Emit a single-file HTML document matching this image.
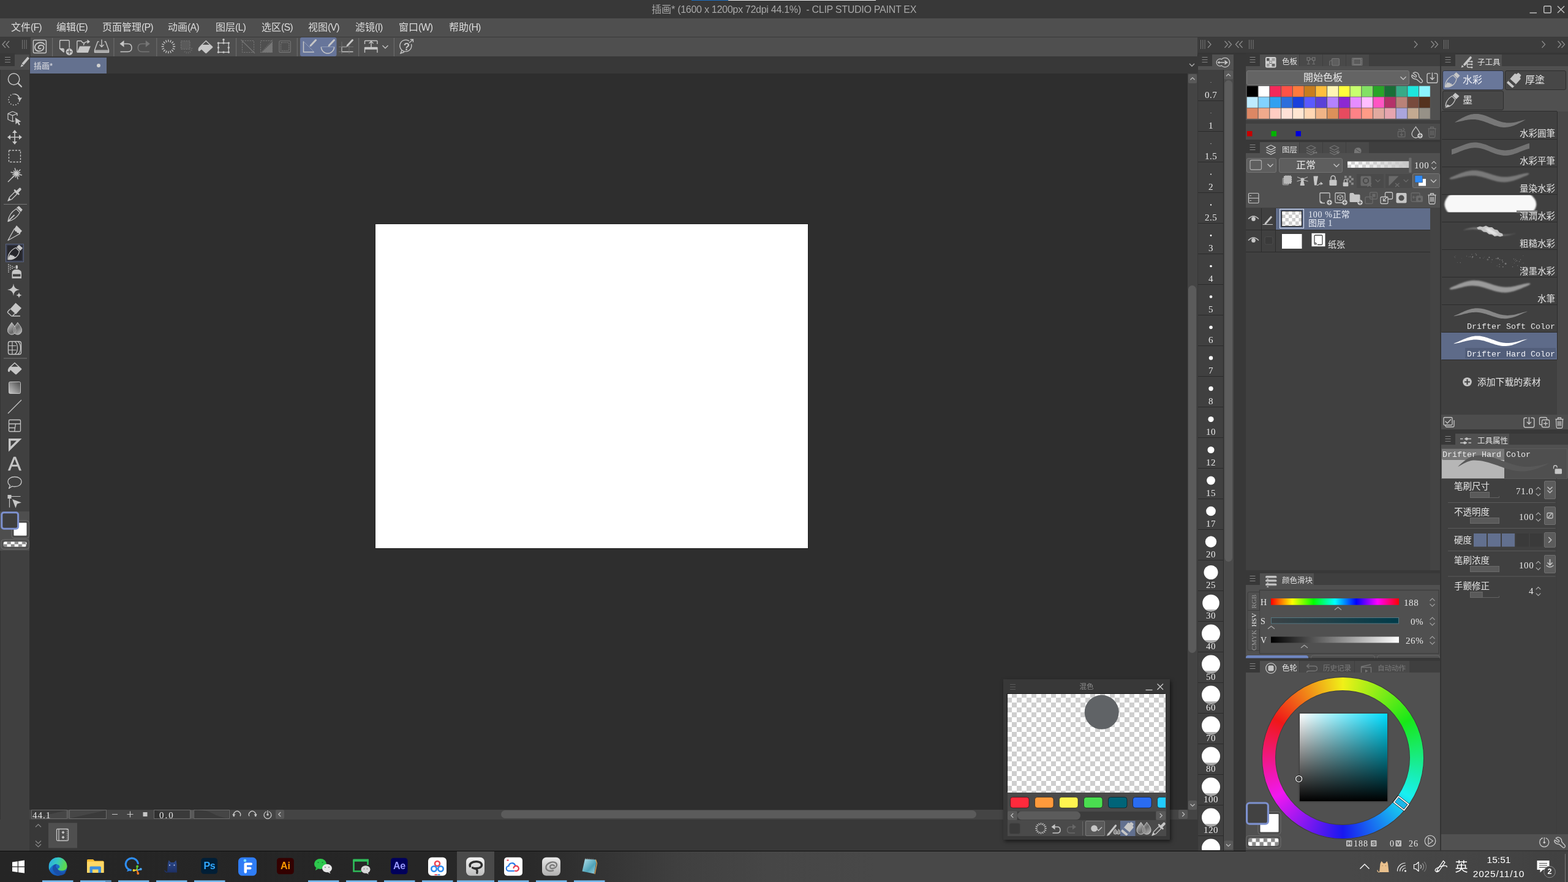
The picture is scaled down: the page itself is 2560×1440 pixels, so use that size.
<!DOCTYPE html>
<html lang="zh"><head><meta charset="utf-8"><title>CLIP STUDIO PAINT</title><style>html,body{margin:0;padding:0}
body{width:2560px;height:1440px;position:relative;overflow:hidden;background:#2e2e2e;font-family:"Liberation Sans","Noto Sans CJK SC",sans-serif}
.a{position:absolute;display:block}
.t{white-space:nowrap;overflow:visible;will-change:transform}
.c{display:inline-block;vertical-align:baseline;white-space:nowrap;font-family:"Liberation Sans","Noto Sans CJK SC",sans-serif}
.g{overflow:visible}
.se{font-family:"Liberation Serif","Noto Sans CJK SC",serif}
.mo{font-family:"Liberation Mono",monospace}
svg{overflow:hidden}</style></head>
<body>
<div class="a" style="left:0px;top:0px;width:2560px;height:30px;background:#383838;"></div>
<div class="a" style="left:1129px;top:0px;width:60px;height:1px;background:#1b6fc2;"></div>
<div class="a" style="left:1189px;top:0px;width:241px;height:1px;background:#f0f0f0;"></div>
<div class="a t" style="top:5px;font-size:16px;line-height:22px;color:#a8a8a8;left:1064px;"><span class="c" style="width:32px">插画</span><span style="letter-spacing:-0.27px">* (1600 x 1200px 72dpi 44.1%)&nbsp; - CLIP STUDIO PAINT EX</span></div>
<svg class="a" style="left:2490px;top:4px;" width="70" height="24" viewBox="2490 4 70 24"><g stroke="#c6c6c6" stroke-width="1.4" fill="none"><path d="M2497.5 21h11.5"/><rect x="2520.7" y="10" width="11.5" height="11" rx="1.5"/><path d="M2543 10l11 11M2554 10l-11 11"/></g></svg>
<div class="a" style="left:0px;top:30px;width:2560px;height:30px;background:#4f4f4f;"></div>
<div class="a" style="left:0px;top:60px;width:2560px;height:1px;background:#393939;"></div>
<div class="a t" style="top:34px;font-size:16px;line-height:22px;color:#dcdcdc;left:18px;"><span class="c" style="width:32px">文件</span><span style="letter-spacing:-0.9px">(F)</span></div>
<div class="a t" style="top:34px;font-size:16px;line-height:22px;color:#dcdcdc;left:92px;"><span class="c" style="width:32px">编辑</span><span style="letter-spacing:-0.9px">(E)</span></div>
<div class="a t" style="top:34px;font-size:16px;line-height:22px;color:#dcdcdc;left:167px;"><span class="c" style="width:64px">页面管理</span><span style="letter-spacing:-0.9px">(P)</span></div>
<div class="a t" style="top:34px;font-size:16px;line-height:22px;color:#dcdcdc;left:274px;"><span class="c" style="width:32px">动画</span><span style="letter-spacing:-0.9px">(A)</span></div>
<div class="a t" style="top:34px;font-size:16px;line-height:22px;color:#dcdcdc;left:352px;"><span class="c" style="width:32px">图层</span><span style="letter-spacing:-0.9px">(L)</span></div>
<div class="a t" style="top:34px;font-size:16px;line-height:22px;color:#dcdcdc;left:427px;"><span class="c" style="width:32px">选区</span><span style="letter-spacing:-0.9px">(S)</span></div>
<div class="a t" style="top:34px;font-size:16px;line-height:22px;color:#dcdcdc;left:503px;"><span class="c" style="width:32px">视图</span><span style="letter-spacing:-0.9px">(V)</span></div>
<div class="a t" style="top:34px;font-size:16px;line-height:22px;color:#dcdcdc;left:580px;"><span class="c" style="width:32px">滤镜</span><span style="letter-spacing:-0.9px">(I)</span></div>
<div class="a t" style="top:34px;font-size:16px;line-height:22px;color:#dcdcdc;left:651px;"><span class="c" style="width:32px">窗口</span><span style="letter-spacing:-0.9px">(W)</span></div>
<div class="a t" style="top:34px;font-size:16px;line-height:22px;color:#dcdcdc;left:733px;"><span class="c" style="width:32px">帮助</span><span style="letter-spacing:-0.9px">(H)</span></div>
<div class="a" style="left:0px;top:61px;width:50px;height:31px;background:#3c3c3c;"></div>
<div class="a" style="left:50px;top:61px;width:1905px;height:31px;background:#4f4f4f;"></div>
<div class="a" style="left:1955px;top:61px;width:605px;height:27px;background:#3c3c3c;"></div>
<svg class="a" style="left:0px;top:61px;" width="700" height="32" viewBox="0 61 700 32"><path d="M9 67L4 72.5L9 78" stroke="#8e8e8e" stroke-width="1.3" fill="none"/><path d="M15 67L10 72.5L15 78" stroke="#8e8e8e" stroke-width="1.3" fill="none"/><path d="M36.5 65v15M39.8 65v15M43.1 65v15" stroke="#777" stroke-width="1" fill="none"/><path d="M85.6 62v30" stroke="#6c6c6c" stroke-width="1.2"/><path d="M185.9 62v30" stroke="#6c6c6c" stroke-width="1.2"/><path d="M255.8 62v30" stroke="#6c6c6c" stroke-width="1.2"/><path d="M385.6 62v30" stroke="#6c6c6c" stroke-width="1.2"/><path d="M485.3 62v30" stroke="#6c6c6c" stroke-width="1.2"/><path d="M585.6 62v30" stroke="#6c6c6c" stroke-width="1.2"/><path d="M643.4 62v30" stroke="#6c6c6c" stroke-width="1.2"/><rect x="490" y="61" width="59.5" height="31" rx="3" fill="#67759a"/><rect x="54.4" y="65.6" width="21" height="21" rx="2" fill="none" stroke="#c6c6c6" stroke-width="1.5"/><path d="M72.6 72.8C70.5 68.5 62 68.3 58.5 72.8C55.5 76.8 57 82.5 62 83.5C67 84.5 72.3 80.5 71.3 76.5C70.3 73.2 65 72.8 63 75.8C61.5 78.3 63.8 80.5 66.5 79.2" fill="none" stroke="#c6c6c6" stroke-width="1.8" stroke-linecap="round"/><path d="M97.6 65.8h14q1.6 0 1.6 1.6v11M104.5 85h-0.5l-6.4-5.5v-12q0-1.7 1.6-1.7M97.8 79.5h5q1.5 0 1.5 1.5v4" fill="none" stroke="#c6c6c6" stroke-width="1.4"/><path d="M98 80h5.5v5z" fill="#c6c6c6"/><circle cx="113.2" cy="84.6" r="5.6" fill="#c6c6c6"/><path d="M113.2 80.8v7.6M109.4 84.6h7.6" stroke="#4f4f4f" stroke-width="1.2"/><path d="M125.8 85v-17q0-1.2 1.2-1.2h5.5l2.5 3h2" fill="none" stroke="#c6c6c6" stroke-width="1.4"/><path d="M125.5 86l4.5-10.5h17.8l-4 10.5z" fill="#c6c6c6"/><path d="M136.5 74c0-4 3-6 7.5-6" fill="none" stroke="#c6c6c6" stroke-width="1.5"/><path d="M142.5 64.5l4.5 3.5l-4.5 3.5z" fill="#c6c6c6"/><path d="M161.5 68h-2l-5 14v3.5h23v-3.5l-5-14h-2" fill="none" stroke="#c6c6c6" stroke-width="1.4" stroke-linejoin="round"/><rect x="155" y="81.5" width="22" height="3.5" fill="#a8a8a8"/><path d="M166 64.5v11.5M162.5 73l3.5 3.5l3.5-3.5" fill="none" stroke="#c6c6c6" stroke-width="1.4"/><path d="M196.5 84.5h12q6.5 0 6.5-6.5q0-6.5-6.5-6.5h-6" fill="none" stroke="#c6c6c6" stroke-width="1.5"/><path d="M195.5 71.5l7-5.5v11z" fill="#c6c6c6"/><g transform="translate(470.3,0) scale(-1,1)"><path d="M226.5 84.5h12q6.5 0 6.5-6.5q0-6.5-6.5-6.5h-6" fill="none" stroke="#767676" stroke-width="1.5"/><path d="M225.5 71.5l7-5.5v11z" fill="#767676"/></g><path d="M282.3 76L286.2 76M281.74 78.83L285.34 80.32M280.13 81.23L282.89 83.99M277.73 82.84L279.22 86.44M274.9 83.4L274.9 87.3M272.07 82.84L270.58 86.44M269.67 81.23L266.91 83.99M268.06 78.83L264.46 80.32M267.5 76L263.6 76M268.06 73.17L264.46 71.68M269.67 70.77L266.91 68.01M272.07 69.16L270.58 65.56M274.9 68.6L274.9 64.7M277.73 69.16L279.22 65.56M280.13 70.77L282.89 68.01M281.74 73.17L285.34 71.68" stroke="#c6c6c6" stroke-width="1.4" fill="none"/><rect x="295.5" y="66.8" width="14.5" height="13.5" fill="#5a5a5a" stroke="#767676" stroke-width="1" stroke-dasharray="2.5 1.5"/><path d="M311.5 79L314.5 79M310.96 81.39L313.66 82.69M309.43 83.3L311.3 85.65M307.22 84.36L307.89 87.29M304.78 84.36L304.11 87.29M302.57 83.3L300.7 85.65" stroke="#666" stroke-width="1.3" fill="none"/><path d="M336.3 65.8l10.8 10.2q0.8 0.9 0 1.8l-9.8 9q-1 0.8-2 0l-6.3-6l-3 2.5q-2.5 0.8-2.5-2q0.3-4 3.5-6.5z" fill="#c6c6c6"/><path d="M336.3 67.8l5.6 5.2h-11.2z" fill="#4f4f4f"/><rect x="356.5" y="70.3" width="16.8" height="15" fill="none" stroke="#c6c6c6" stroke-width="1.4"/><path d="M365 70v-5" stroke="#c6c6c6" stroke-width="1.4"/><circle cx="356.5" cy="70.3" r="1.7" fill="#c6c6c6"/><circle cx="365" cy="70.3" r="1.7" fill="#c6c6c6"/><circle cx="373.3" cy="70.3" r="1.7" fill="#c6c6c6"/><circle cx="356.5" cy="77.8" r="1.7" fill="#c6c6c6"/><circle cx="373.3" cy="77.8" r="1.7" fill="#c6c6c6"/><circle cx="356.5" cy="85.3" r="1.7" fill="#c6c6c6"/><circle cx="365" cy="85.3" r="1.7" fill="#c6c6c6"/><circle cx="373.3" cy="85.3" r="1.7" fill="#c6c6c6"/><circle cx="365" cy="64.8" r="1.7" fill="#c6c6c6"/><rect x="395.5" y="66.5" width="19" height="19" fill="none" stroke="#767676" stroke-width="1" stroke-dasharray="2.5 1.5"/><path d="M393.5 65l22.5 22" stroke="#767676" stroke-width="1.3"/><rect x="425.5" y="66.5" width="19" height="19" fill="none" stroke="#767676" stroke-width="1" stroke-dasharray="2.5 1.5"/><path d="M444.8 68v17.8h-17.8z" fill="#767676"/><path d="M426 86l19-21" stroke="#767676" stroke-width="1" stroke-dasharray="2 1.3"/><rect x="455.8" y="66.8" width="18.6" height="18.6" rx="2" fill="none" stroke="#767676" stroke-width="1.1"/><rect x="458.5" y="69.5" width="13.2" height="13.2" rx="1.5" fill="none" stroke="#767676" stroke-width="1.6" stroke-dasharray="1.5 1.5"/><path d="M495.5 67.5v17.5h17.5" fill="none" stroke="#c6c6c6" stroke-width="1.5"/><path d="M495.5 67.5l17.5 17.5" stroke="#8f9bb8" stroke-width="1"/><path d="M507.5 74L515.5 65.5" stroke="#c6c6c6" stroke-width="3" stroke-linecap="round"/><path d="M505.3 76.2l1-3l2 2z" fill="#c6c6c6"/><path d="M524.3 76.5a10.7 10.7 0 0 0 21.4 0" fill="none" stroke="#c6c6c6" stroke-width="1.4"/><path d="M524.3 76.5h21.4" stroke="#8f9bb8" stroke-width="1"/><path d="M537.5 74L545.5 65.5" stroke="#c6c6c6" stroke-width="3" stroke-linecap="round"/><path d="M535.3 76.2l1-3l2 2z" fill="#c6c6c6"/><path d="M558 76.5v8h18.5M558 76.5h8" fill="none" stroke="#c6c6c6" stroke-width="1.4"/><path d="M553 76.5h24M558 68v20M570 74v14M553 84.5h5" stroke="#777" stroke-width="0.8"/><path d="M567.5 74L575.5 65.5" stroke="#c6c6c6" stroke-width="3" stroke-linecap="round"/><path d="M565.3 76.2l1-3l2 2z" fill="#c6c6c6"/><path d="M595.5 72v-4.5q0-1 1-1h18.5q1 0 1 1v4.5M595.5 86v-8h20.5v8" fill="none" stroke="#c6c6c6" stroke-width="1.4"/><rect x="595.5" y="76.8" width="20.5" height="4" fill="#c6c6c6"/><path d="M606 77v-9M602.5 71l3.5-3.5l3.5 3.5" fill="none" stroke="#c6c6c6" stroke-width="1.4"/><path d="M624.5 74.25L629 78.75L633.5 74.25" stroke="#c6c6c6" stroke-width="1.3" fill="none"/><path d="M668 67a9.5 9.5 0 1 0 3.5 5" fill="none" stroke="#c6c6c6" stroke-width="1.4"/><path d="M656 82l-2 5l6-2" fill="none" stroke="#c6c6c6" stroke-width="1.4"/><path d="M668 70l6-5M670 64.5h4.5v4.5" fill="none" stroke="#c6c6c6" stroke-width="1.3"/></svg>
<div class="a t" style="top:65px;font-size:17px;line-height:23px;color:#c6c6c6;left:363.5px;width:600px;text-align:center;font-weight:bold;">?</div>
<div class="a" style="left:48px;top:92px;width:1907px;height:28px;background:#383838;"></div>
<div class="a" style="left:49px;top:94px;width:125px;height:26px;background:#64718f;"></div>
<div class="a t" style="top:97.5px;font-size:13px;line-height:19px;color:#e2e2e6;left:55px;"><span class="c" style="width:26px">插画</span>*</div>
<div class="a" style="left:158px;top:104px;width:6px;height:6px;background:#d0d0d0;border-radius:3px;"></div>
<svg class="a" style="left:1938px;top:98px;" width="16" height="16" viewBox="1938 98 16 16"><path d="M1942 104L1946 108L1950 104" stroke="#b0b0b0" stroke-width="1.3" fill="none"/></svg>
<div class="a" style="left:0px;top:88px;width:48px;height:1302px;background:#404040;"></div>
<div class="a" style="left:0px;top:86px;width:48px;height:3px;background:#3c3c3c;"></div>
<div class="a" style="left:0px;top:86.5px;width:24px;height:21.3px;background:#383838;"></div>
<div class="a" style="left:24px;top:89px;width:24px;height:25px;background:#4d4d4d;"></div>
<div class="a" style="left:0px;top:108px;width:48px;height:6px;background:#4d4d4d;"></div>
<div class="a" style="left:0px;top:114px;width:1px;height:1276px;background:#353535;"></div>
<div class="a" style="left:0px;top:835px;width:48px;height:64px;background:#4e4e4e;"></div>
<svg class="a" style="left:0px;top:86px;" width="49" height="820" viewBox="0 86 49 820"><path d="M8 93.5h9M8 97.5h9M8 101.5h9" stroke="#858585" stroke-width="1" fill="none"/><path d="M46.5 94l-9.5 11" stroke="#c6c6c6" stroke-width="4" stroke-linecap="butt"/><path d="M33.5 109.5l1.7-4.8l3.3 2.8z" fill="#c6c6c6"/><g transform="translate(24,131)"><circle cx="-1.4" cy="-1.8" r="9.2" fill="none" stroke="#c6c6c6" stroke-width="1.5"/><path d="M5.5 5l5.5 5.5" stroke="#c6c6c6" stroke-width="2.2" stroke-linecap="round"/></g><g transform="translate(24,162)"><circle cx="-2.56" cy="-8.36" r="0.9" fill="#c6c6c6"/><circle cx="-6.42" cy="-6.69" r="0.9" fill="#c6c6c6"/><circle cx="-9.09" cy="-3.45" r="0.9" fill="#c6c6c6"/><circle cx="-10" cy="0.66" r="0.9" fill="#c6c6c6"/><circle cx="-8.95" cy="4.73" r="0.9" fill="#c6c6c6"/><circle cx="-6.16" cy="7.87" r="0.9" fill="#c6c6c6"/><circle cx="-2.25" cy="9.41" r="0.9" fill="#c6c6c6"/><circle cx="1.93" cy="9.01" r="0.9" fill="#c6c6c6"/><circle cx="5.47" cy="6.75" r="0.9" fill="#c6c6c6"/><circle cx="7.61" cy="3.13" r="0.9" fill="#c6c6c6"/><circle cx="7.86" cy="-1.06" r="0.9" fill="#c6c6c6"/><circle cx="6.19" cy="-4.92" r="0.9" fill="#c6c6c6"/><path d="M-1-8.5a9 9 0 0 1 8.8 7" fill="none" stroke="#c6c6c6" stroke-width="1.5"/><path d="M4.5-2.5h7.5l-3.8 5.5z" fill="#c6c6c6"/></g><g transform="translate(24,193)"><path d="M-3.5-11l7.5 3v4M-3.5-11l-7.5 3.5v9.5l7.5 3.5l3-1.2M-11-7.5l7.5 3.2l7.5-3.2M-3.5-4.3v10" fill="none" stroke="#c6c6c6" stroke-width="1.3" stroke-linejoin="round"/><path d="M1-1l9.5 6.5l-4 0.8l2.3 4.2l-2 1l-2.3-4.3l-3 2.8z" fill="#c6c6c6"/></g><g transform="translate(24,224)"><path d="M0-7v14M-7 0h14" stroke="#c6c6c6" stroke-width="1.6"/><path d="M0-12l4 5h-8zM0 12l4-5h-8zM-12 0l5-4v8zM12 0l-5-4v8z" fill="#c6c6c6"/></g><g transform="translate(24,255)"><rect x="-9.5" y="-9.5" width="19" height="19" fill="none" stroke="#c6c6c6" stroke-width="1.3" stroke-dasharray="3.2 2"/></g><g transform="translate(24,286)"><path d="M2.7-2.5L11.88 -0.04M2.7-2.5L7.3 2.1M2.7-2.5L5.16 6.68M2.7-2.5L1.02 3.78M2.7-2.5L-4.02 4.22M2.7-2.5L-3.58 -0.82M2.7-2.5L-6.48 -4.96M2.7-2.5L-1.9 -7.1M2.7-2.5L0.24 -11.68M2.7-2.5L4.38 -8.78M2.7-2.5L9.42 -9.22M2.7-2.5L8.98 -4.18" stroke="#c6c6c6" stroke-width="1.5"/><circle cx="2.7" cy="-2.5" r="3.2" fill="#c6c6c6"/><path d="M-11 11l11-11" stroke="#c6c6c6" stroke-width="1.5"/></g><g transform="translate(24,317)"><path d="M-11 11l2.5-6l9-9l3.5 3.5l-9 9z" fill="none" stroke="#c6c6c6" stroke-width="1.3" stroke-linejoin="round"/><path d="M-11 11l2-5l3 3z" fill="#c6c6c6"/><path d="M0-6.5l6.5 6.5" stroke="#c6c6c6" stroke-width="2.5" stroke-linecap="round"/><path d="M4-3.5l4.5-4.5" stroke="#c6c6c6" stroke-width="4.5" stroke-linecap="round"/></g><path d="M6 333.5h38" stroke="#777" stroke-width="1"/><g transform="translate(24,350)"><path d="M-11 11.5c1-8 6-16 13.5-20.5l6 6c-4.5 7.5-12 13-19.5 14.5z" fill="none" stroke="#c6c6c6" stroke-width="1.3" stroke-linejoin="round"/><path d="M-10 10.5l9-9" stroke="#c6c6c6" stroke-width="1.8" stroke-linecap="round"/><path d="M3-11l3.8-2.7l6 6l-2.7 3.7z" fill="#c6c6c6"/></g><g transform="translate(24,381)"><path d="M-11 11.5l10.5-19l9 8z" fill="none" stroke="#c6c6c6" stroke-width="1.4" stroke-linejoin="round"/><path d="M-0.5-7.5l3.5-5.5l9 9l-4 4.5l-2-1.5l-2 0.5l-1-2.5l-2.5-0.5z" fill="#c6c6c6"/></g><rect x="9.5" y="398.5" width="29" height="29" fill="#27272c" stroke="#59637f" stroke-width="1"/><rect x="11" y="400" width="26" height="26" fill="none" stroke="#49506a" stroke-width="1"/><g transform="translate(24,412)"><path d="M-11 11.5c-0.5-8 5-16 13-19l5.5 5.5c-1 8-8 14.5-18.5 13.5z" fill="none" stroke="#c6c6c6" stroke-width="1.3"/><path d="M-11 11.5c0.5-3 2-6 4-8l1.5 1.5l1.5-1l1 2l2-0.5l0.5 2l2.5 0c-3 3-8 4.5-13 4z" fill="#c6c6c6"/><path d="M3-8.5l4-4l6 5.5l-4 4.5z" fill="#c6c6c6"/></g><g transform="translate(24,443)"><rect x="-10.8" y="-11.8" width="1.6" height="1.6" fill="#c6c6c6"/><rect x="-10.8" y="-8.8" width="1.6" height="1.6" fill="#c6c6c6"/><rect x="-10.8" y="-5.8" width="1.6" height="1.6" fill="#c6c6c6"/><rect x="-10.8" y="-2.8" width="1.6" height="1.6" fill="#c6c6c6"/><rect x="-10.8" y="0.19999999999999996" width="1.6" height="1.6" fill="#c6c6c6"/><rect x="-7.8" y="-10.3" width="1.6" height="1.6" fill="#c6c6c6"/><rect x="-7.8" y="-7.3" width="1.6" height="1.6" fill="#c6c6c6"/><rect x="-7.8" y="-4.3" width="1.6" height="1.6" fill="#c6c6c6"/><rect x="-4.8" y="-8.8" width="1.6" height="1.6" fill="#c6c6c6"/><rect x="-4.8" y="-5.8" width="1.6" height="1.6" fill="#c6c6c6"/><rect x="-1.8" y="-7.3" width="1.6" height="1.6" fill="#c6c6c6"/><rect x="1.5" y="-10" width="3.5" height="6" rx="1.5" fill="#c6c6c6"/><path d="M-4.5 11.5v-9q0-5.5 7.5-5.5q8 0 8 5.5v9z" fill="#c6c6c6"/><rect x="-3" y="4.5" width="12.5" height="4" fill="#404040"/></g><g transform="translate(24,475)"><path d="M-2 -12Q-1.2999999999999998 -2.7 8 -2Q-1.2999999999999998 -1.2999999999999998 -2 8Q-2.7 -1.2999999999999998 -12 -2Q-2.7 -2.7 -2 -12zM7 2Q7.35 6.65 12 7Q7.35 7.35 7 12Q6.65 7.35 2 7Q6.65 6.65 7 2z" fill="#c6c6c6"/></g><g transform="translate(24,506)"><path d="M1.5-11.5l9.5 8.5l-9 10l-9.5-8.5z" fill="#c6c6c6"/><path d="M-7.5-1.5l-3.5 4q-1 1.2 0 2.2l5.5 5q1 0.8 2 0l4.5-4.5M-4 10h13" fill="none" stroke="#c6c6c6" stroke-width="1.4"/></g><defs><linearGradient id="gb" x1="0" y1="0" x2="1" y2="1"><stop offset="0" stop-color="#d0d0d0"/><stop offset="0.55" stop-color="#6a6a6a"/><stop offset="1" stop-color="#c0c0c0"/></linearGradient><linearGradient id="gg" x1="1" y1="0" x2="0" y2="1"><stop offset="0" stop-color="#4a4a4a"/><stop offset="1" stop-color="#c8c8c8"/></linearGradient></defs><g transform="translate(24,537)"><path d="M-4.8-10.5c3.3 4.8 6.7 8 6.7 13a6.7 6.7 0 0 1-13.4 0c0-5 3.4-8.2 6.7-13zM4.8-10.5c3.3 4.8 6.7 8 6.7 13a6.7 6.7 0 0 1-13.4 0c0-5 3.4-8.2 6.7-13z" fill="url(#gb)" stroke="#c6c6c6" stroke-width="1"/><path d="M0-3.5c1.5 2 2 3.8 2 6a6.7 6.7 0 0 1-2 4.7a6.7 6.7 0 0 1-2-4.7c0-2.2 0.5-4 2-6z" fill="#8a8a8a"/></g><g transform="translate(24,568)"><rect x="-10.5" y="-10.5" width="21" height="21" rx="3" fill="none" stroke="#c6c6c6" stroke-width="1.4"/><path d="M-10.5-3.5h13M-10.5 3.5h13M-4-10.5v21M0-10.5c6 4 6 17 0 21M5-10.5c6 5 6 16 0 21" fill="none" stroke="#c6c6c6" stroke-width="1.2"/></g><path d="M6 585h38" stroke="#777" stroke-width="1"/><g transform="translate(24,602)"><path d="M0-10.5l11 10.3q0.8 0.9 0 1.8l-8 7.5q-1 0.8-2 0l-8-7l-1.5 3q-2.5 0.8-2.7-2q0.2-4 3.5-6.5z" fill="#c6c6c6"/><path d="M0-8.5l5.6 5.2h-11.2z" fill="#404040"/></g><g transform="translate(24,633)"><rect x="-9.5" y="-9.5" width="19" height="19" rx="2" fill="url(#gg)" stroke="#c6c6c6" stroke-width="1"/></g><g transform="translate(24,664)"><path d="M-11 11l22-22" stroke="#c6c6c6" stroke-width="1.3"/></g><g transform="translate(24,695)"><rect x="-9.5" y="-9.5" width="19" height="19" rx="1.5" fill="none" stroke="#c6c6c6" stroke-width="1.3"/><path d="M-9.5-3h19M-9.5 3.5h9.5M1.5-3l-1.8 12.5" fill="none" stroke="#c6c6c6" stroke-width="1.3"/></g><g transform="translate(24,726)"><path d="M-10-10h21.5l-21.5 21.5zM-6.5-6.5v9.5l9.5-9.5z" fill="#c6c6c6" fill-rule="evenodd"/></g><g transform="translate(24,788)"><path d="M0-9.5c6.5 0 11 3.5 11 8s-4.5 8-11 8c-1.5 0-3-0.2-4.3-0.6l-5.2 3.6l2-5c-2.2-1.5-3.5-3.6-3.5-6c0-4.5 4.5-8 11-8z" fill="none" stroke="#c6c6c6" stroke-width="1.3" stroke-linejoin="round"/></g><g transform="translate(24,819)"><rect x="-11.5" y="-11" width="6" height="6" fill="#c6c6c6"/><path d="M-8.5-8.5h18M-8.5-8.5v18" stroke="#c6c6c6" stroke-width="1.2"/><path d="M-4-4l15 5.5l-7 2l-2.5 7z" fill="#c6c6c6"/></g><rect x="19" y="850" width="28.5" height="28.5" rx="4" fill="#484848" stroke="#6e6e6e" stroke-width="1"/><rect x="22.5" y="853.5" width="21" height="21" rx="1" fill="#fff"/><rect x="2.8" y="836.8" width="26.8" height="26.5" rx="3.5" fill="#3e3e3e" stroke="#7d91cf" stroke-width="3"/><rect x="2" y="881" width="45.5" height="15.5" rx="4" fill="none" stroke="#6e6e6e" stroke-width="1"/><defs><pattern id="ck4" x="5.5" y="884.2" width="12.2" height="8.6" patternUnits="userSpaceOnUse"><rect width="12.2" height="8.6" fill="#fff"/><rect x="6.1" width="6.1" height="4.3" fill="#8a8a8a"/><rect y="4.3" width="6.1" height="4.3" fill="#8a8a8a"/></pattern></defs><rect x="5.5" y="884.2" width="38" height="8.6" rx="3" fill="url(#ck4)"/></svg>
<div class="a t" style="top:741px;font-size:32px;line-height:32px;color:#c6c6c6;left:-276px;width:600px;text-align:center;-webkit-text-stroke:0.5px #c6c6c6;">A</div>
<div class="a" style="left:48px;top:120px;width:1891px;height:1202px;background:#2e2e2e;"></div>
<div class="a" style="left:613px;top:366px;width:706px;height:529px;background:#ffffff;box-shadow:0 0 0 1px #202020;"></div>
<div class="a" style="left:1939px;top:120px;width:16px;height:1202px;background:#444444;"></div>
<div class="a" style="left:1955px;top:92px;width:1px;height:1298px;background:#383838;"></div>
<div class="a" style="left:1940px;top:121px;width:14px;height:15px;background:#585858;border-radius:2px;"></div>
<div class="a" style="left:1940px;top:1307px;width:14px;height:15px;background:#585858;border-radius:2px;"></div>
<div class="a" style="left:1940px;top:466px;width:13px;height:600px;background:#5b5b5b;border-radius:7px;"></div>
<svg class="a" style="left:1938px;top:120px;" width="18" height="1205" viewBox="1938 120 18 1205"><path d="M1943.5 130.25L1947 126.75L1950.5 130.25" stroke="#c0c0c0" stroke-width="1.2" fill="none"/><path d="M1943.5 1312.75L1947 1316.25L1950.5 1312.75" stroke="#c0c0c0" stroke-width="1.2" fill="none"/></svg>
<div class="a" style="left:48px;top:1322px;width:1907px;height:16px;background:#444444;"></div>
<div class="a" style="left:48px;top:1338px;width:1907px;height:52px;background:#383838;"></div>
<div class="a" style="left:0px;top:1338px;width:48px;height:52px;background:#404040;"></div>
<svg class="a" style="left:48px;top:1320px;" width="1910" height="70" viewBox="48 1320 1910 70"><rect x="51.5" y="1322.5" width="58" height="14" fill="#3a3a3a" stroke="#6a6a6a" stroke-width="1"/><rect x="113.5" y="1322.5" width="60" height="14" fill="#3a3a3a" stroke="#6a6a6a" stroke-width="1"/><rect x="251.5" y="1322.5" width="59" height="14" fill="#3a3a3a" stroke="#6a6a6a" stroke-width="1"/><rect x="316.5" y="1322.5" width="58" height="14" fill="#3a3a3a" stroke="#6a6a6a" stroke-width="1"/><path d="M52 1336l57-13v13zM114 1336l59-13h-59z" fill="#4a4a4a" opacity="0.8"/><path d="M252 1323l30 8q10 5 28-8z" fill="#4a4a4a" opacity="0"/><path d="M317 1323q20-1 30 5t26 8v-13z" fill="#454545"/><path d="M252 1323q8 1 14 7t10 6h-24z" fill="#303030"/><rect x="108.5" y="1322.5" width="4" height="14" fill="#5a5a5a"/><rect x="311" y="1322.5" width="4.5" height="14" fill="#5a5a5a"/><path d="M183 1329.5h9M207.5 1329.5h10M212.5 1324.5v10" stroke="#c6c6c6" stroke-width="1.2"/><rect x="233.5" y="1326" width="7" height="7" fill="#c6c6c6"/><path d="M382.5 1333a5.5 5.5 0 1 1 9.5-0.5" fill="none" stroke="#c6c6c6" stroke-width="1.4"/><path d="M379.5 1329l5 0.5l-3.5 4z" fill="#c6c6c6"/><g transform="translate(824,0) scale(-1,1)"><path d="M407.5 1333a5.5 5.5 0 1 1 9.5-0.5" fill="none" stroke="#c6c6c6" stroke-width="1.4"/><path d="M404.5 1329l5 0.5l-3.5 4z" fill="#c6c6c6"/></g><path d="M435 1325a6 6 0 1 0 4 0" fill="none" stroke="#c6c6c6" stroke-width="1.3"/><circle cx="437" cy="1330" r="1.8" fill="#c6c6c6"/><path d="M437 1323v6" stroke="#c6c6c6" stroke-width="1.2"/><rect x="450" y="1322" width="14" height="15" rx="2" fill="#565656"/><rect x="1924" y="1322" width="15" height="15" rx="2" fill="#565656"/><path d="M458.25 1326L454.75 1329.5L458.25 1333" stroke="#c0c0c0" stroke-width="1.2" fill="none"/><path d="M1930.25 1326L1933.75 1329.5L1930.25 1333" stroke="#c0c0c0" stroke-width="1.2" fill="none"/><rect x="818" y="1323" width="776" height="13" rx="6.5" fill="#5b5b5b"/><rect x="79" y="1343.5" width="47" height="41" fill="#4f4f4f"/><rect x="92.5" y="1353.5" width="19" height="19" rx="1.5" fill="none" stroke="#c6c6c6" stroke-width="1.3"/><path d="M96 1353.5v19" stroke="#c6c6c6" stroke-width="1.2"/><path d="M103 1356.5l2.5 2.5l-2.5 2.5l-2.5-2.5zM103 1364.5l2.5 2.5l-2.5 2.5l-2.5-2.5z" fill="#c6c6c6"/><path d="M109.5 1354v18" stroke="#c6c6c6" stroke-width="0.8" stroke-dasharray="1.5 1.5"/><path d="M58 1350.25L62.5 1345.75L67 1350.25" stroke="#8a8a8a" stroke-width="1.2" fill="none"/><path d="M58 1372.75L62.5 1377.25L67 1372.75" stroke="#8a8a8a" stroke-width="1.2" fill="none"/><path d="M58 1378.25L62.5 1382.75L67 1378.25" stroke="#8a8a8a" stroke-width="1.2" fill="none"/></svg>
<div class="a t se" style="top:1321px;font-size:15px;line-height:21px;color:#e6e6e6;left:53px;"><span style="letter-spacing:1px">44.1</span></div>
<div class="a t se" style="top:1321px;font-size:15px;line-height:21px;color:#e6e6e6;left:260px;"><span style="letter-spacing:2px">0.0</span></div>
<div class="a" style="left:1956px;top:88px;width:58px;height:1302px;background:#404040;"></div>
<div class="a" style="left:1956px;top:86.5px;width:23px;height:21.3px;background:#383838;"></div>
<div class="a" style="left:1979px;top:88px;width:35px;height:26px;background:#515151;"></div>
<div class="a" style="left:1956px;top:108px;width:58px;height:6px;background:#515151;"></div>
<div class="a" style="left:1998px;top:114px;width:16px;height:1276px;background:#4a4a4a;"></div>
<div class="a" style="left:2014px;top:88px;width:20px;height:1302px;background:#383838;"></div>
<svg class="a" style="left:1956px;top:88px;" width="58" height="1302" viewBox="1956 88 58 1302"><path d="M1962.5 93.5h9M1962.5 97.5h9M1962.5 101.5h9" stroke="#858585" stroke-width="1" fill="none"/><circle cx="1992" cy="102" r="5.8" fill="#515151" stroke="#c6c6c6" stroke-width="1.3"/><circle cx="2000" cy="102" r="7.6" fill="#515151" stroke="#c6c6c6" stroke-width="1.3"/><circle cx="1992" cy="102" r="5.1" fill="#515151"/><path d="M1990 102h9" stroke="#c6c6c6" stroke-width="1.6"/><path d="M1987.5 102l3.5-2.5v5zM2005 102l-5.5-4v8z" fill="#c6c6c6"/><rect x="1998.5" y="115" width="14.5" height="14.5" rx="2" fill="#5a5a5a"/><path d="M2002 124.25L2005.5 120.75L2009 124.25" stroke="#c0c0c0" stroke-width="1.2" fill="none"/><rect x="1998.5" y="1372.5" width="14.5" height="14.5" rx="2" fill="#5a5a5a"/><path d="M2002 1378.25L2005.5 1381.75L2009 1378.25" stroke="#c0c0c0" stroke-width="1.2" fill="none"/><rect x="1999.5" y="131" width="12.5" height="786" rx="6.2" fill="#5d5d5d"/><defs><clipPath id="cbs"><rect x="1956" y="114" width="42" height="1274"/></clipPath></defs><g clip-path="url(#cbs)"><path d="M1956 164.5h41.5" stroke="#2b2b2b" stroke-width="1.2"/><circle cx="1977" cy="134.5" r="0.55" fill="#fff" opacity="0.7"/><path d="M1956 214.5h41.5" stroke="#2b2b2b" stroke-width="1.2"/><circle cx="1977" cy="184.5" r="0.55" fill="#fff" opacity="0.7"/><path d="M1956 264.5h41.5" stroke="#2b2b2b" stroke-width="1.2"/><circle cx="1977" cy="234.5" r="0.69" fill="#fff" opacity="0.7"/><path d="M1956 314.5h41.5" stroke="#2b2b2b" stroke-width="1.2"/><circle cx="1977" cy="284.5" r="0.92" fill="#fff" opacity="1"/><path d="M1956 364.5h41.5" stroke="#2b2b2b" stroke-width="1.2"/><circle cx="1977" cy="334.5" r="1.15" fill="#fff" opacity="1"/><path d="M1956 414.5h41.5" stroke="#2b2b2b" stroke-width="1.2"/><circle cx="1977" cy="384.5" r="1.38" fill="#fff" opacity="1"/><path d="M1956 464.5h41.5" stroke="#2b2b2b" stroke-width="1.2"/><circle cx="1977" cy="434.5" r="1.84" fill="#fff" opacity="1"/><path d="M1956 514.5h41.5" stroke="#2b2b2b" stroke-width="1.2"/><circle cx="1977" cy="484.5" r="2.3" fill="#fff" opacity="1"/><path d="M1956 564.5h41.5" stroke="#2b2b2b" stroke-width="1.2"/><circle cx="1977" cy="534.5" r="2.76" fill="#fff" opacity="1"/><path d="M1956 614.5h41.5" stroke="#2b2b2b" stroke-width="1.2"/><circle cx="1977" cy="584.5" r="3.22" fill="#fff" opacity="1"/><path d="M1956 664.5h41.5" stroke="#2b2b2b" stroke-width="1.2"/><circle cx="1977" cy="634.5" r="3.68" fill="#fff" opacity="1"/><path d="M1956 714.5h41.5" stroke="#2b2b2b" stroke-width="1.2"/><circle cx="1977" cy="684.5" r="4.6" fill="#fff" opacity="1"/><path d="M1956 764.5h41.5" stroke="#2b2b2b" stroke-width="1.2"/><circle cx="1977" cy="734.5" r="5.52" fill="#fff" opacity="1"/><path d="M1956 814.5h41.5" stroke="#2b2b2b" stroke-width="1.2"/><circle cx="1977" cy="784.5" r="6.9" fill="#fff" opacity="1"/><path d="M1956 864.5h41.5" stroke="#2b2b2b" stroke-width="1.2"/><circle cx="1977" cy="834.5" r="7.82" fill="#fff" opacity="1"/><path d="M1956 914.5h41.5" stroke="#2b2b2b" stroke-width="1.2"/><circle cx="1977" cy="884.5" r="9.2" fill="#fff" opacity="1"/><path d="M1956 964.5h41.5" stroke="#2b2b2b" stroke-width="1.2"/><circle cx="1977" cy="934.5" r="11.5" fill="#fff" opacity="1"/><path d="M1956 1014.5h41.5" stroke="#2b2b2b" stroke-width="1.2"/><circle cx="1977" cy="984.5" r="13.8" fill="#fff" opacity="1"/><path d="M1968.29 995.2a13.8 13.8 0 0 0 17.43 0z" fill="#a6a6a6"/><path d="M1956 1064.5h41.5" stroke="#2b2b2b" stroke-width="1.2"/><circle cx="1977" cy="1034.5" r="15" fill="#fff" opacity="1"/><path d="M1966.49 1045.2a15 15 0 0 0 21.02 0z" fill="#a6a6a6"/><path d="M1956 1114.5h41.5" stroke="#2b2b2b" stroke-width="1.2"/><circle cx="1977" cy="1084.5" r="15" fill="#fff" opacity="1"/><path d="M1966.49 1095.2a15 15 0 0 0 21.02 0z" fill="#a6a6a6"/><path d="M1956 1164.5h41.5" stroke="#2b2b2b" stroke-width="1.2"/><circle cx="1977" cy="1134.5" r="15" fill="#fff" opacity="1"/><path d="M1966.49 1145.2a15 15 0 0 0 21.02 0z" fill="#a6a6a6"/><path d="M1956 1214.5h41.5" stroke="#2b2b2b" stroke-width="1.2"/><circle cx="1977" cy="1184.5" r="15" fill="#fff" opacity="1"/><path d="M1966.49 1195.2a15 15 0 0 0 21.02 0z" fill="#a6a6a6"/><path d="M1956 1264.5h41.5" stroke="#2b2b2b" stroke-width="1.2"/><circle cx="1977" cy="1234.5" r="15" fill="#fff" opacity="1"/><path d="M1966.49 1245.2a15 15 0 0 0 21.02 0z" fill="#a6a6a6"/><path d="M1956 1314.5h41.5" stroke="#2b2b2b" stroke-width="1.2"/><circle cx="1977" cy="1284.5" r="15" fill="#fff" opacity="1"/><path d="M1966.49 1295.2a15 15 0 0 0 21.02 0z" fill="#a6a6a6"/><path d="M1956 1364.5h41.5" stroke="#2b2b2b" stroke-width="1.2"/><circle cx="1977" cy="1334.5" r="15" fill="#fff" opacity="1"/><path d="M1966.49 1345.2a15 15 0 0 0 21.02 0z" fill="#a6a6a6"/><path d="M1956 1414.5h41.5" stroke="#2b2b2b" stroke-width="1.2"/><circle cx="1977" cy="1384.5" r="15" fill="#fff" opacity="1"/><path d="M1966.49 1395.2a15 15 0 0 0 21.02 0z" fill="#a6a6a6"/></g><path d="M1997.5 114v1276" stroke="#2b2b2b" stroke-width="1"/></svg>
<div class="a t se" style="top:144.5px;font-size:15px;line-height:21px;color:#eaeaea;left:1677px;width:600px;text-align:center;"><span style="letter-spacing:0.5px">0.7</span></div>
<div class="a t se" style="top:194.5px;font-size:15px;line-height:21px;color:#eaeaea;left:1677px;width:600px;text-align:center;"><span style="letter-spacing:0.5px">1</span></div>
<div class="a t se" style="top:244.5px;font-size:15px;line-height:21px;color:#eaeaea;left:1677px;width:600px;text-align:center;"><span style="letter-spacing:0.5px">1.5</span></div>
<div class="a t se" style="top:294.5px;font-size:15px;line-height:21px;color:#eaeaea;left:1677px;width:600px;text-align:center;"><span style="letter-spacing:0.5px">2</span></div>
<div class="a t se" style="top:344.5px;font-size:15px;line-height:21px;color:#eaeaea;left:1677px;width:600px;text-align:center;"><span style="letter-spacing:0.5px">2.5</span></div>
<div class="a t se" style="top:394.5px;font-size:15px;line-height:21px;color:#eaeaea;left:1677px;width:600px;text-align:center;"><span style="letter-spacing:0.5px">3</span></div>
<div class="a t se" style="top:444.5px;font-size:15px;line-height:21px;color:#eaeaea;left:1677px;width:600px;text-align:center;"><span style="letter-spacing:0.5px">4</span></div>
<div class="a t se" style="top:494.5px;font-size:15px;line-height:21px;color:#eaeaea;left:1677px;width:600px;text-align:center;"><span style="letter-spacing:0.5px">5</span></div>
<div class="a t se" style="top:544.5px;font-size:15px;line-height:21px;color:#eaeaea;left:1677px;width:600px;text-align:center;"><span style="letter-spacing:0.5px">6</span></div>
<div class="a t se" style="top:594.5px;font-size:15px;line-height:21px;color:#eaeaea;left:1677px;width:600px;text-align:center;"><span style="letter-spacing:0.5px">7</span></div>
<div class="a t se" style="top:644.5px;font-size:15px;line-height:21px;color:#eaeaea;left:1677px;width:600px;text-align:center;"><span style="letter-spacing:0.5px">8</span></div>
<div class="a t se" style="top:694.5px;font-size:15px;line-height:21px;color:#eaeaea;left:1677px;width:600px;text-align:center;"><span style="letter-spacing:0.5px">10</span></div>
<div class="a t se" style="top:744.5px;font-size:15px;line-height:21px;color:#eaeaea;left:1677px;width:600px;text-align:center;"><span style="letter-spacing:0.5px">12</span></div>
<div class="a t se" style="top:794.5px;font-size:15px;line-height:21px;color:#eaeaea;left:1677px;width:600px;text-align:center;"><span style="letter-spacing:0.5px">15</span></div>
<div class="a t se" style="top:844.5px;font-size:15px;line-height:21px;color:#eaeaea;left:1677px;width:600px;text-align:center;"><span style="letter-spacing:0.5px">17</span></div>
<div class="a t se" style="top:894.5px;font-size:15px;line-height:21px;color:#eaeaea;left:1677px;width:600px;text-align:center;"><span style="letter-spacing:0.5px">20</span></div>
<div class="a t se" style="top:944.5px;font-size:15px;line-height:21px;color:#eaeaea;left:1677px;width:600px;text-align:center;"><span style="letter-spacing:0.5px">25</span></div>
<div class="a t se" style="top:994.5px;font-size:15px;line-height:21px;color:#eaeaea;left:1677px;width:600px;text-align:center;"><span style="letter-spacing:0.5px">30</span></div>
<div class="a t se" style="top:1044.5px;font-size:15px;line-height:21px;color:#eaeaea;left:1677px;width:600px;text-align:center;"><span style="letter-spacing:0.5px">40</span></div>
<div class="a t se" style="top:1094.5px;font-size:15px;line-height:21px;color:#eaeaea;left:1677px;width:600px;text-align:center;"><span style="letter-spacing:0.5px">50</span></div>
<div class="a t se" style="top:1144.5px;font-size:15px;line-height:21px;color:#eaeaea;left:1677px;width:600px;text-align:center;"><span style="letter-spacing:0.5px">60</span></div>
<div class="a t se" style="top:1194.5px;font-size:15px;line-height:21px;color:#eaeaea;left:1677px;width:600px;text-align:center;"><span style="letter-spacing:0.5px">70</span></div>
<div class="a t se" style="top:1244.5px;font-size:15px;line-height:21px;color:#eaeaea;left:1677px;width:600px;text-align:center;"><span style="letter-spacing:0.5px">80</span></div>
<div class="a t se" style="top:1294.5px;font-size:15px;line-height:21px;color:#eaeaea;left:1677px;width:600px;text-align:center;"><span style="letter-spacing:0.5px">100</span></div>
<div class="a t se" style="top:1344.5px;font-size:15px;line-height:21px;color:#eaeaea;left:1677px;width:600px;text-align:center;"><span style="letter-spacing:0.5px">120</span></div>
<div class="a" style="left:0px;top:1389px;width:2560px;height:1px;background:#0c0c0c;"></div>
<div class="a" style="left:0px;top:1390px;width:2560px;height:50px;background:linear-gradient(to right,#252525 0,#262626 27%,#2a2a2a 34%,#343434 38.5%,#404040 43.5%,#464646 49%,#484848 56%,#484848 86%,#454545 93%,#414141 100%);"></div>
<div class="a" style="left:746px;top:1390px;width:61px;height:50px;background:#4a4a4a;"></div>
<svg class="a" style="left:0px;top:1390px;" width="2560" height="50" viewBox="0 1390 2560 50"><rect x="69" y="1437.3" width="50.5" height="3" fill="#76b9ed"/><rect x="131" y="1437.3" width="50.5" height="3" fill="#76b9ed"/><rect x="193" y="1437.3" width="50.5" height="3" fill="#76b9ed"/><rect x="255" y="1437.3" width="50.5" height="3" fill="#76b9ed"/><rect x="317" y="1437.3" width="50.5" height="3" fill="#76b9ed"/><rect x="503" y="1437.3" width="50.5" height="3" fill="#76b9ed"/><rect x="565" y="1437.3" width="50.5" height="3" fill="#76b9ed"/><rect x="627" y="1437.3" width="50.5" height="3" fill="#76b9ed"/><rect x="689" y="1437.3" width="50.5" height="3" fill="#76b9ed"/><rect x="813" y="1437.3" width="50.5" height="3" fill="#76b9ed"/><rect x="875" y="1437.3" width="50.5" height="3" fill="#76b9ed"/><rect x="937" y="1437.3" width="50.5" height="3" fill="#76b9ed"/><rect x="746" y="1437.3" width="61" height="3" fill="#76b9ed"/><rect x="172" y="1437.3" width="9.5" height="3" fill="#5b8fbb"/><path d="M20 1407.5l8.8-1.3v8.3h-8.8zM30 1406l10-1.4v9.9h-10zM20 1415.7h8.8v8.3l-8.8-1.3zM30 1415.7h10v9.9l-10-1.4z" fill="#fff"/><defs><linearGradient id="eg1" x1="0" y1="0" x2="1" y2="0.3"><stop offset="0" stop-color="#2aa6e8"/><stop offset="0.5" stop-color="#35c8c0"/><stop offset="1" stop-color="#5bd84e"/></linearGradient><linearGradient id="eg2" x1="0" y1="0" x2="0.3" y2="1"><stop offset="0" stop-color="#1f8fe6"/><stop offset="1" stop-color="#1557b8"/></linearGradient></defs><circle cx="94.5" cy="1415" r="15" fill="url(#eg2)"/><path d="M80 1411a15 15 0 0 1 29.5 3c0.2 5-4 7.5-8.5 7.5c-4 0-7-1.5-7-3.5c3 0 4-2.5 3-4.5c-1.5-3-7-3.5-10.5-1c-3 2-5 5-6.5 8z" fill="url(#eg1)"/><path d="M94 1418c-3-1-4-5-1-7c-4-1-8 3-7 8c1 5 6 9 12 10c4 0 8-2 10-5c-5 3-12 0-14-6z" fill="#1a4fa8"/><path d="M142 1404.5q0-1.5 1.5-1.5h8.5l2.5 2.5h13.5q1.5 0 1.5 1.5v18h-27.5z" fill="#f7b92f"/><rect x="142" y="1406.5" width="27.5" height="18.5" rx="1" fill="#ffd866"/><path d="M146.5 1425v-9q0-1.5 1.5-1.5h15.5q1.5 0 1.5 1.5v9h-4.5v-5.5h-9.5v5.5z" fill="#3d8fe0"/><path d="M225.4 1409.5A10.2 9.8 0 1 0 213.5 1420.6" fill="none" stroke="#2f8def" stroke-width="3.2" stroke-linecap="round"/><path d="M209.5 1417.5l-2.5 5.5l6-1.5z" fill="#2f8def"/><g stroke-width="2.2" stroke-linecap="round"><path d="M223.5 1419.5l0.5-4" stroke="#5bc832"/><path d="M223 1420.5l-3.5 0.5" stroke="#f5d02e"/><path d="M224 1421.5l1 3.5" stroke="#f57a23"/><path d="M225 1420.5l3.5-1" stroke="#49a3f5"/></g><circle cx="224.2" cy="1414.5" r="2" fill="#5bc832"/><circle cx="218.5" cy="1421" r="2" fill="#f5d02e"/><circle cx="225.3" cy="1426" r="2" fill="#f57a23"/><circle cx="229.8" cy="1419" r="2" fill="#49a3f5"/><defs><linearGradient id="ctg" x1="0" y1="0" x2="0" y2="1"><stop offset="0" stop-color="#2c4a8c"/><stop offset="1" stop-color="#1d2f63"/></linearGradient></defs><path d="M273 1424.5l1-14.5l1.5-5.5l3.5 3.5h5l3.5-3.5l1 5.5l0.5 14.5z" fill="url(#ctg)"/><circle cx="277" cy="1412.5" r="0.9" fill="#dfe8ff"/><circle cx="284.5" cy="1412.5" r="0.9" fill="#dfe8ff"/><path d="M273 1424q-3.5 0-4-3" fill="none" stroke="#1f336b" stroke-width="1.5"/><rect x="328.3" y="1400.8" width="26.8" height="26" rx="4.5" fill="#001e36"/><rect x="389" y="1399.8" width="30" height="30" rx="6.5" fill="#2f7df6"/><path d="M398.5 1409v14.5q0 2.3 2.3 2.3q2.2 0 2.2-2.3v-4h5.5q2 0 2-2t-2-2h-5.5v-3h7q2 0 2-2t-2-2h-9q-2.5 0-2.5 2.5z" fill="#fff"/><circle cx="400" cy="1405" r="2.3" fill="#7fe3ff"/><rect x="452" y="1400.8" width="27.8" height="26.5" rx="4.5" fill="#330000"/><rect x="638" y="1400.8" width="27.5" height="26.5" rx="4.5" fill="#00005b"/><ellipse cx="523" cy="1410.5" rx="10" ry="8.5" fill="#2dc84d"/><path d="M516 1417l-1 4l4.5-2.5z" fill="#2dc84d"/><ellipse cx="534" cy="1417.5" rx="8" ry="6.8" fill="#e8e8e8"/><path d="M538 1423l1.5 3.2l-4-2z" fill="#e8e8e8"/><circle cx="531" cy="1416" r="1" fill="#888"/><circle cx="537" cy="1416" r="1" fill="#888"/><circle cx="519.5" cy="1408" r="1.1" fill="#1a8a34"/><circle cx="526.5" cy="1408" r="1.1" fill="#1a8a34"/><path d="M577.5 1404h23v8M590 1422.5h-12.5v-18.5" fill="none" stroke="#2fbe5a" stroke-width="2.6"/><rect x="576.3" y="1402.7" width="25.5" height="4" fill="#2fbe5a"/><ellipse cx="597" cy="1419.5" rx="7.5" ry="6.3" fill="#d8d8d8"/><path d="M600.5 1424.5l1.5 3l-4-2z" fill="#d8d8d8"/><circle cx="594.5" cy="1418.5" r="0.9" fill="#888"/><circle cx="599.5" cy="1418.5" r="0.9" fill="#888"/><rect x="699" y="1399.8" width="30" height="30" rx="6" fill="#fff"/><circle cx="714" cy="1410" r="4" fill="none" stroke="#f04452" stroke-width="2.6"/><circle cx="708.5" cy="1418.5" r="4.2" fill="none" stroke="#2d8cf0" stroke-width="2.6"/><circle cx="719.5" cy="1418.5" r="4.2" fill="none" stroke="#2d8cf0" stroke-width="2.6"/><rect x="709.5" y="1427.3" width="4.5" height="1.7" fill="#f04452"/><rect x="714.5" y="1427.3" width="4" height="1.7" fill="#2d8cf0"/><defs><linearGradient id="cspg" x1="0" y1="0" x2="0" y2="1"><stop offset="0" stop-color="#f2f2f2"/><stop offset="1" stop-color="#bdbdbd"/></linearGradient><linearGradient id="cspg2" x1="0" y1="0" x2="0" y2="1"><stop offset="0" stop-color="#e8e8e8"/><stop offset="1" stop-color="#b0b0b0"/></linearGradient></defs><rect x="761" y="1399.8" width="30" height="30" rx="7" fill="url(#cspg)"/><path d="M767.5 1414.5C765.5 1410 771.5 1406.3 778.5 1406.8C786 1407.3 788.8 1412.5 784.5 1415.8C781 1418.3 774.5 1418.3 771.5 1416.8" fill="none" stroke="#2e2e2e" stroke-width="3.4" stroke-linecap="round"/><path d="M774.5 1417.8C778.5 1418 780 1421 778.8 1425.3" fill="none" stroke="#2e2e2e" stroke-width="3.4" stroke-linecap="round"/><rect x="823" y="1399.8" width="30" height="30" rx="5" fill="#fff"/><path d="M839 1422h-8a4 4 0 0 1-0.5-8a5.5 5.5 0 0 1 10.5-1.5" fill="none" stroke="#2b7de9" stroke-width="2.2" stroke-linecap="round"/><path d="M838.5 1417a4.2 4.2 0 1 1 2.5 4.8" fill="none" stroke="#e8384f" stroke-width="2.2" stroke-linecap="round"/><rect x="827.5" y="1403.5" width="3" height="2" fill="#e8384f"/><rect x="885" y="1399.8" width="30" height="30" rx="7" fill="url(#cspg2)"/><path d="M905 1413.5c-1.5-2-5-2-6.5 0c-1.5 2.5 0.5 5 3.5 4.5c4-0.6 7.5-3 7-6.5c-0.6-3.5-5.5-5-10-3.5c-5 1.5-8.5 5.5-7.5 9.5c1 4 6.5 5.5 11.5 3.8" fill="none" stroke="#7b7b7b" stroke-width="2.4" stroke-linecap="round"/><defs><linearGradient id="npg" x1="0" y1="0" x2="1" y2="1"><stop offset="0" stop-color="#b8e4ee"/><stop offset="0.6" stop-color="#4fa3b8"/><stop offset="1" stop-color="#9fd3e0"/></linearGradient></defs><path d="M955 1402.5l17.5 1l1 4l-3.5 19l-19.5-4z" fill="url(#npg)"/><path d="M972.5 1403.5l2 6l-3.5 17.5" fill="none" stroke="#d9a55a" stroke-width="1.3"/><path d="M956 1403v-2M959 1403.2v-2M962 1403.4v-2M965 1403.6v-2M968 1403.8v-2" stroke="#888" stroke-width="0.9"/><path d="M2220.5 1418.5l7.5-7.5l7.5 7.5" fill="none" stroke="#fff" stroke-width="1.4"/><path d="M2252 1424l1.5-14l2-4l3 3.5h3l3-3.5l1.5 4l1.5 14z" fill="#e9c08d"/><path d="M2252 1424q-3.5-0.5-3-3.5" fill="none" stroke="#e9c08d" stroke-width="1.3"/><circle cx="2257" cy="1413.5" r="0.6" fill="#7a5a3a"/><circle cx="2262.5" cy="1413.5" r="0.6" fill="#7a5a3a"/><g fill="none" stroke="#e8e8e8" stroke-width="1.2"><path d="M2281.5 1422.5a13 13 0 0 1 13-13.5"/><path d="M2285.5 1422.5a9.5 9.5 0 0 1 9.5-9.5"/><path d="M2289.5 1422.5a5.5 5.5 0 0 1 5.5-5.5"/></g><circle cx="2294.5" cy="1422" r="1.5" fill="#fff"/><path d="M2308.5 1411.5h3l4.5-4v15l-4.5-4h-3z" fill="none" stroke="#fff" stroke-width="1.2" stroke-linejoin="round"/><g fill="none" stroke-width="1.1"><path d="M2319 1412a4 4 0 0 1 0 6" stroke="#ddd"/><path d="M2322 1409.5a7.5 7.5 0 0 1 0 11" stroke="#999"/><path d="M2325 1407a11 11 0 0 1 0 16" stroke="#777"/></g><g fill="none" stroke="#fff" stroke-width="1.3"><path d="M2356.5 1405.5l2.5 2.5l-10 14.5l-3 1l0.5-3.5z"/><path d="M2349 1421q-4 3.5-5.5 1t3-5q5-3 11-3.5q6-0.5 4.5 2.5"/></g><path d="M2509.5 1405h20v15h-10.5l-4.5 4.5v-4.5h-5z" fill="#fff"/><path d="M2513 1409.5h13M2513 1412.8h13M2513 1416.1h13" stroke="#444" stroke-width="1.1"/><circle cx="2530" cy="1423.5" r="9.3" fill="#444" stroke="#8a8a8a" stroke-width="1"/><path d="M2555.5 1394v46" stroke="#777" stroke-width="1"/></svg>
<div class="a t" style="top:1403px;font-size:16px;line-height:22px;color:#31a8ff;left:41.69999999999999px;width:600px;text-align:center;font-weight:bold;"><span style="letter-spacing:-0.3px">Ps</span></div>
<div class="a t" style="top:1403px;font-size:16px;line-height:22px;color:#ff9a00;left:165.89999999999998px;width:600px;text-align:center;font-weight:bold;">Ai</div>
<div class="a t" style="top:1403px;font-size:16px;line-height:22px;color:#9999ff;left:351.70000000000005px;width:600px;text-align:center;font-weight:bold;"><span style="letter-spacing:-0.3px">Ae</span></div>
<div class="a t" style="top:1402.5px;font-size:21px;line-height:24px;color:#fff;left:2086px;width:600px;text-align:center;"><span class="c" style="width:21px">英</span></div>
<div class="a t" style="top:1393.25px;font-size:15.5px;line-height:21.5px;color:#fff;left:2147px;width:600px;text-align:center;">15:51</div>
<div class="a t" style="top:1415.75px;font-size:15.5px;line-height:21.5px;color:#fff;left:2147px;width:600px;text-align:center;"><span style="letter-spacing:0.8px">2025/11/10</span></div>
<div class="a t" style="top:1414.25px;font-size:12.5px;line-height:18.5px;color:#fff;left:2230px;width:600px;text-align:center;font-weight:bold;">2</div>
<div class="a" style="left:1955px;top:86px;width:605px;height:3px;background:#363636;"></div>
<svg class="a" style="left:1955px;top:61px;" width="605" height="27" viewBox="1955 61 605 27"><path d="M1960.5 65v15M1963.8 65v15M1967.1 65v15" stroke="#777" stroke-width="1" fill="none"/><path d="M1972 67L1977 72.5L1972 78" stroke="#8c8c8c" stroke-width="1.3" fill="none"/><path d="M1999.5 67L2004.5 72.5L1999.5 78" stroke="#8c8c8c" stroke-width="1.3" fill="none"/><path d="M2005.5 67L2010.5 72.5L2005.5 78" stroke="#8c8c8c" stroke-width="1.3" fill="none"/><path d="M2022.5 67L2017.5 72.5L2022.5 78" stroke="#8c8c8c" stroke-width="1.3" fill="none"/><path d="M2028.5 67L2023.5 72.5L2028.5 78" stroke="#8c8c8c" stroke-width="1.3" fill="none"/><path d="M2039.5 65v15M2042.8 65v15M2046.1 65v15" stroke="#777" stroke-width="1" fill="none"/><path d="M2309 67L2314 72.5L2309 78" stroke="#8c8c8c" stroke-width="1.3" fill="none"/><path d="M2336.5 67L2341.5 72.5L2336.5 78" stroke="#8c8c8c" stroke-width="1.3" fill="none"/><path d="M2342.5 67L2347.5 72.5L2342.5 78" stroke="#8c8c8c" stroke-width="1.3" fill="none"/><path d="M2357.5 65v15M2360.8 65v15M2364.1 65v15" stroke="#777" stroke-width="1" fill="none"/><path d="M2517.5 67L2522.5 72.5L2517.5 78" stroke="#8c8c8c" stroke-width="1.3" fill="none"/><path d="M2543.5 67L2548.5 72.5L2543.5 78" stroke="#8c8c8c" stroke-width="1.3" fill="none"/><path d="M2549.5 67L2554.5 72.5L2549.5 78" stroke="#8c8c8c" stroke-width="1.3" fill="none"/></svg>
<div class="a" style="left:2034px;top:89px;width:317px;height:141px;background:#505050;"></div>
<div class="a" style="left:2034px;top:89px;width:317px;height:19px;background:#3f3f3f;"></div>
<div class="a" style="left:2034px;top:89px;width:23px;height:19px;background:#383838;"></div>
<div class="a" style="left:2057px;top:89px;width:64px;height:24px;background:#505050;"></div>
<div class="a" style="left:2122px;top:89px;width:37px;height:19px;background:#494949;"></div>
<div class="a" style="left:2160px;top:89px;width:37px;height:19px;background:#494949;"></div>
<div class="a" style="left:2198px;top:89px;width:37px;height:19px;background:#494949;"></div>
<div class="a" style="left:2034px;top:86.5px;width:23px;height:2.5px;background:#383838;"></div>
<div class="a" style="left:2034px;top:195.5px;width:317px;height:6.5px;background:#404040;"></div>
<div class="a" style="left:2034px;top:202px;width:317px;height:26px;background:#4b4b4b;"></div>
<div class="a" style="left:2034px;top:228px;width:317px;height:4px;background:#383838;"></div>
<div class="a" style="left:2351px;top:89px;width:2px;height:1301px;background:#343434;"></div>
<div class="a" style="left:2035px;top:115px;width:266px;height:24px;background:#646464;border:1px solid #787878;border-radius:3px;box-sizing:border-box;"></div>
<svg class="a" style="left:2034px;top:89px;" width="317" height="141" viewBox="2034 89 317 141"><path d="M2040.5 93.5h9M2040.5 97.5h9M2040.5 101.5h9" stroke="#858585" stroke-width="1" fill="none"/><rect x="2066" y="93" width="17.5" height="17.5" rx="2.5" fill="#cfcfcf"/><rect x="2068" y="95" width="4.5" height="4.5" fill="#555"/><rect x="2076.5" y="95" width="5" height="4.5" fill="#a0a0a0"/><rect x="2072.5" y="99.5" width="4" height="4.5" fill="#6e6e6e"/><rect x="2068" y="104" width="4.5" height="4.5" fill="#9a9a9a"/><rect x="2076.5" y="104" width="5" height="4.5" fill="#666"/><rect x="2073.5" y="100.5" width="2.2" height="2.2" fill="#fff"/><g stroke="#767676" fill="none" stroke-width="1.2"><rect x="2134" y="94" width="4.5" height="4.5"/><rect x="2142.5" y="94" width="4.5" height="4.5"/><path d="M2138.5 96.3h4M2136.3 98.5v5M2144.8 98.5v5M2134 104.5h4.5M2142.5 104.5h4.5"/></g><g stroke="#767676" fill="none" stroke-width="1.2"><path d="M2171 107v-6.5q0-1.5 1.5-1.5h2"/><rect x="2174.5" y="95.5" width="12" height="11.5" rx="1.5" fill="#5e5e5e"/></g><rect x="2207" y="94.5" width="17.5" height="12.5" rx="1" fill="#767676"/><rect x="2210.5" y="97" width="10.5" height="7.5" fill="#5a5a5a"/><path d="M2208.5 96v10M2223 96v10" stroke="#494949" stroke-width="1.3" stroke-dasharray="1.5 1.5"/><path d="M2286.5 125.25L2291 129.75L2295.5 125.25" stroke="#c6c6c6" stroke-width="1.3" fill="none"/><g transform="translate(2313.5,126.5)"><path d="M-6.4-7C-4-9.3 0.5-8.9 2.3-5.7C3.5-3.5 3-2 3.3-1L8.5 4.7C10 6.5 7.5 9.5 5.5 8.3L-0.2 3.4C-2 2.1-4 2.9-5.9 1.7C-8.3 0.1-9-2.5-8.2-4.2L-3.3-0.9C-1.9-0.1-0.3-1.5-1.1-3.1Z" fill="none" stroke="#c6c6c6" stroke-width="1.4" stroke-linejoin="round"/></g><g transform="translate(2338.4,127.6)" fill="none" stroke="#c6c6c6" stroke-width="1.4"><path d="M-3-7.7h-3q-2.4 0-2.4 2.4v10.6q0 2.4 2.4 2.4h12q2.4 0 2.4-2.4v-10.6q0-2.4-2.4-2.4h-3"/><path d="M0-9v11.5M-3.5-1.2l3.5 3.7l3.5-3.7"/></g><rect x="2035.3" y="140" width="300.5" height="55" fill="#5a5a5a"/><rect x="2035.8" y="140.5" width="17.75" height="17.3" fill="#000000"/><rect x="2054.55" y="140.5" width="17.75" height="17.3" fill="#ffffff"/><rect x="2073.3" y="140.5" width="17.75" height="17.3" fill="#f5295a"/><rect x="2092.05" y="140.5" width="17.75" height="17.3" fill="#ff5247"/><rect x="2110.8" y="140.5" width="17.75" height="17.3" fill="#ff7a3d"/><rect x="2129.55" y="140.5" width="17.75" height="17.3" fill="#c87d1e"/><rect x="2148.3" y="140.5" width="17.75" height="17.3" fill="#ffbe3c"/><rect x="2167.05" y="140.5" width="17.75" height="17.3" fill="#fff5b4"/><rect x="2185.8" y="140.5" width="17.75" height="17.3" fill="#ffff3c"/><rect x="2204.55" y="140.5" width="17.75" height="17.3" fill="#c8ff6e"/><rect x="2223.3" y="140.5" width="17.75" height="17.3" fill="#82e164"/><rect x="2242.05" y="140.5" width="17.75" height="17.3" fill="#28a528"/><rect x="2260.8" y="140.5" width="17.75" height="17.3" fill="#196e37"/><rect x="2279.55" y="140.5" width="17.75" height="17.3" fill="#37aa87"/><rect x="2298.3" y="140.5" width="17.75" height="17.3" fill="#1ee6dc"/><rect x="2317.05" y="140.5" width="17.75" height="17.3" fill="#8cf5ff"/><rect x="2035.8" y="158.5" width="17.75" height="17.3" fill="#beebff"/><rect x="2054.55" y="158.5" width="17.75" height="17.3" fill="#82d2ff"/><rect x="2073.3" y="158.5" width="17.75" height="17.3" fill="#32a0f0"/><rect x="2092.05" y="158.5" width="17.75" height="17.3" fill="#2d6edc"/><rect x="2110.8" y="158.5" width="17.75" height="17.3" fill="#1940dc"/><rect x="2129.55" y="158.5" width="17.75" height="17.3" fill="#5a5aff"/><rect x="2148.3" y="158.5" width="17.75" height="17.3" fill="#5a41d7"/><rect x="2167.05" y="158.5" width="17.75" height="17.3" fill="#b482ff"/><rect x="2185.8" y="158.5" width="17.75" height="17.3" fill="#8c28d2"/><rect x="2204.55" y="158.5" width="17.75" height="17.3" fill="#e68cff"/><rect x="2223.3" y="158.5" width="17.75" height="17.3" fill="#ffbeff"/><rect x="2242.05" y="158.5" width="17.75" height="17.3" fill="#ff55c3"/><rect x="2260.8" y="158.5" width="17.75" height="17.3" fill="#b43269"/><rect x="2279.55" y="158.5" width="17.75" height="17.3" fill="#b98278"/><rect x="2298.3" y="158.5" width="17.75" height="17.3" fill="#784b3c"/><rect x="2317.05" y="158.5" width="17.75" height="17.3" fill="#55321e"/><rect x="2035.8" y="176.5" width="17.75" height="17.3" fill="#dc8764"/><rect x="2054.55" y="176.5" width="17.75" height="17.3" fill="#f0aa8c"/><rect x="2073.3" y="176.5" width="17.75" height="17.3" fill="#ffcdc3"/><rect x="2092.05" y="176.5" width="17.75" height="17.3" fill="#ffe1d7"/><rect x="2110.8" y="176.5" width="17.75" height="17.3" fill="#ffe6d2"/><rect x="2129.55" y="176.5" width="17.75" height="17.3" fill="#ffd7b4"/><rect x="2148.3" y="176.5" width="17.75" height="17.3" fill="#f0b487"/><rect x="2167.05" y="176.5" width="17.75" height="17.3" fill="#dc915a"/><rect x="2185.8" y="176.5" width="17.75" height="17.3" fill="#e64b5f"/><rect x="2204.55" y="176.5" width="17.75" height="17.3" fill="#ff8287"/><rect x="2223.3" y="176.5" width="17.75" height="17.3" fill="#ff9b87"/><rect x="2242.05" y="176.5" width="17.75" height="17.3" fill="#e1aaa0"/><rect x="2260.8" y="176.5" width="17.75" height="17.3" fill="#e6a5af"/><rect x="2279.55" y="176.5" width="17.75" height="17.3" fill="#aaa5dc"/><rect x="2298.3" y="176.5" width="17.75" height="17.3" fill="#c3aa91"/><rect x="2317.05" y="176.5" width="17.75" height="17.3" fill="#969187"/><rect x="2036" y="214" width="8.5" height="8.5" fill="#c80000"/><rect x="2075.5" y="214" width="8.5" height="8.5" fill="#00b400"/><rect x="2115.5" y="214" width="8.5" height="8.5" fill="#0000dc"/><g stroke="#686868" fill="none" stroke-width="1.3"><path d="M2283 211.5h5.5v3M2290.5 209l2.5 2.5l-2.5 2.5"/><rect x="2282.5" y="214.5" width="11.5" height="9" rx="1"/><path d="M2288.3 216v5M2286 219l2.3 2.3l2.3-2.3"/></g><path d="M2311.5 207c3 4.5 6.5 8 6.5 11.5a6.5 6.5 0 0 1-13 0c0-3.5 3.5-7 6.5-11.5z" fill="none" stroke="#c6c6c6" stroke-width="1.3"/><circle cx="2318.5" cy="221.5" r="4.3" fill="#c6c6c6"/><path d="M2318.5 218.8v5.4M2315.8 221.5h5.4" stroke="#4b4b4b" stroke-width="1.1"/><g transform="translate(2338,215.5)" stroke="#686868" fill="none" stroke-width="1.3"><path d="M-6.5-5.5h13M-2.5-5.5v-2.5h5v2.5M-5.5-5.5l0.7 13q0.1 1.5 1.6 1.5h6.4q1.5 0 1.6-1.5l0.7-13M-2.3-2.5v8M0-2.5v8M2.3-2.5v8"/></g></svg>
<div class="a t" style="top:92.25px;font-size:12.5px;line-height:18.5px;color:#e0e0e0;left:2093px;"><span class="c" style="width:25px">色板</span></div>
<div class="a t" style="top:115.5px;font-size:16px;line-height:22px;color:#e8e8e8;left:1860px;width:600px;text-align:center;"><span class="c" style="width:64px">開始色板</span></div>
<div class="a" style="left:2034px;top:232px;width:317px;height:700px;background:#505050;"></div>
<div class="a" style="left:2034px;top:232px;width:317px;height:18px;background:#3f3f3f;"></div>
<div class="a" style="left:2034px;top:232px;width:23px;height:18px;background:#383838;"></div>
<div class="a" style="left:2057px;top:232px;width:64px;height:24px;background:#505050;"></div>
<div class="a" style="left:2122px;top:232px;width:37px;height:18px;background:#494949;"></div>
<div class="a" style="left:2160px;top:232px;width:37px;height:18px;background:#494949;"></div>
<div class="a" style="left:2198px;top:232px;width:37px;height:18px;background:#494949;"></div>
<div class="a" style="left:2034px;top:339px;width:317px;height:593px;background:#404040;"></div>
<div class="a" style="left:2335px;top:339px;width:16px;height:592px;background:#444444;"></div>
<div class="a" style="left:2034px;top:931px;width:317px;height:5px;background:#383838;"></div>
<div class="a" style="left:2035px;top:258px;width:49px;height:24px;background:#5e5e5e;border:1px solid #727272;border-radius:3px;box-sizing:border-box;"></div>
<div class="a" style="left:2088px;top:258px;width:104px;height:24px;background:#5e5e5e;border:1px solid #727272;border-radius:3px;box-sizing:border-box;"></div>
<div class="a" style="left:2306px;top:283px;width:45px;height:24px;background:#5e5e5e;border:1px solid #767676;border-radius:3px;box-sizing:border-box;"></div>
<svg class="a" style="left:2034px;top:232px;" width="317" height="200" viewBox="2034 232 317 200"><path d="M2040.5 236.5h9M2040.5 240.5h9M2040.5 244.5h9" stroke="#858585" stroke-width="1" fill="none"/><g transform="translate(2075,245.5)" fill="none" stroke="#c6c6c6" stroke-width="1.3" stroke-linejoin="round"><path d="M0-8.5l7.5 3.8l-7.5 3.8l-7.5-3.8z"/><path d="M-7.5-1l7.5 3.8l7.5-3.8M-7.5 2.8l7.5 3.8l7.5-3.8"/></g><g opacity="0.9"><g transform="translate(2140.5,246)" fill="none" stroke="#767676" stroke-width="1.3" stroke-linejoin="round"><path d="M0-8.5l7.5 3.8l-7.5 3.8l-7.5-3.8z"/><path d="M-7.5-1l7.5 3.8l7.5-3.8M-7.5 2.8l7.5 3.8l7.5-3.8"/></g><g transform="translate(2178.5,246)" fill="none" stroke="#767676" stroke-width="1.3" stroke-linejoin="round"><path d="M0-8.5l7.5 3.8l-7.5 3.8l-7.5-3.8z"/><path d="M-7.5-1l7.5 3.8l7.5-3.8M-7.5 2.8l7.5 3.8l7.5-3.8"/></g></g><circle cx="2145" cy="249" r="1.5" fill="#767676"/><circle cx="2149" cy="249" r="1.5" fill="#767676"/><path d="M2181 247.5h7l-3.5 4z" fill="#767676"/><path d="M2211 250v-2q0-7 6-7q5.5 0 5.5 5.5q0 2-1 3.5z" fill="#767676"/><path d="M2213.5 243.5l7.5 5" stroke="#494949" stroke-width="1"/><rect x="2041" y="261.5" width="18.5" height="15.5" rx="2.5" fill="#5e5e5e" stroke="#a8a8a8" stroke-width="1.3"/><path d="M2069.5 267.75L2074 272.25L2078.5 267.75" stroke="#c6c6c6" stroke-width="1.3" fill="none"/><path d="M2177.5 267.75L2182 272.25L2186.5 267.75" stroke="#c6c6c6" stroke-width="1.3" fill="none"/><defs><pattern id="ck6" x="2200" y="263.5" width="12" height="10.4" patternUnits="userSpaceOnUse"><rect width="12" height="10.4" fill="#d0d0d0"/><rect width="6" height="5.2" fill="#fff"/><rect x="6" y="5.2" width="6" height="5.2" fill="#fff"/></pattern><linearGradient id="og" x1="0" y1="0" x2="1" y2="0"><stop offset="0" stop-color="#d0d0d0" stop-opacity="0"/><stop offset="1" stop-color="#c8c8c8" stop-opacity="1"/></linearGradient></defs><rect x="2200" y="263.5" width="100.5" height="10.4" fill="url(#ck6)"/><rect x="2200" y="263.5" width="100.5" height="10.4" fill="url(#og)"/><rect x="2300.3" y="257.5" width="4.2" height="24.5" rx="1" fill="#6c6c6c"/><path d="M2337.2 267.4L2341 263.6L2344.8 267.4" stroke="#c6c6c6" stroke-width="1.1" fill="none"/><path d="M2337.2 272.6L2341 276.4L2344.8 272.6" stroke="#c6c6c6" stroke-width="1.1" fill="none"/><rect x="2093.5" y="290" width="11" height="12.5" rx="2" fill="#8c8c8c"/><rect x="2096.5" y="287" width="12" height="12.5" rx="2" fill="#b8b8b8" stroke="#c6c6c6" stroke-width="1.1" stroke-dasharray="2.2 1.2"/><path d="M2123 302.5l2-8h2.5l2 8zM2124.5 291h4l0.5 3.5h-5zM2118 289l6 2.5M2135 289l-6 2.5M2117.5 296l6.5-2M2135.5 296l-6.5-2" fill="#c6c6c6" stroke="#c6c6c6" stroke-width="1"/><path d="M2144.5 287.5h7.5l-1.5 8q-0.5 3-1 7h-3.5q-0.5-5-1-8z" fill="#c6c6c6"/><path d="M2150 302q2 1 4-1.5q2-2 4.5-0.5M2156 297.5l3 2.5l-3.5 1.5" fill="none" stroke="#c6c6c6" stroke-width="1.2"/><g transform="translate(2176.5,295) scale(1)"><rect x="-6" y="-1.5" width="12" height="9.5" rx="1.5" fill="#c6c6c6"/><path d="M-3.5-1.5v-3a3.5 3.5 0 0 1 7 0v3" fill="none" stroke="#c6c6c6" stroke-width="1.6"/></g><g fill="#8a8a8a"><rect x="2195" y="287" width="3.7" height="3.7"/><rect x="2202.4" y="287" width="3.7" height="3.7"/><rect x="2198.7" y="290.7" width="3.7" height="3.7"/><rect x="2206.1" y="290.7" width="3.7" height="3.7"/><rect x="2202.4" y="294.4" width="3.7" height="3.7"/><rect x="2206.1" y="298.1" width="3.7" height="3.7"/></g><g transform="translate(2197,298.5) scale(0.72)"><rect x="-6" y="-1.5" width="12" height="9.5" rx="1.5" fill="#c6c6c6"/><path d="M-3.5-1.5v-3a3.5 3.5 0 0 1 7 0v3" fill="none" stroke="#c6c6c6" stroke-width="1.6"/></g><rect x="2215" y="284" width="44" height="23" fill="#4a4a4a"/><rect x="2262" y="284" width="43" height="23" fill="#4a4a4a"/><rect x="2221.5" y="287.5" width="17" height="16" rx="1.5" fill="#6a6a6a"/><circle cx="2230" cy="295" r="4.2" fill="none" stroke="#4a4a4a" stroke-width="2"/><path d="M2232.5 299l6.5 6M2239 299l-6.5 6" stroke="#6e6e6e" stroke-width="1.2"/><path d="M2245.7 293.1L2249.5 296.9L2253.3 293.1" stroke="#6e6e6e" stroke-width="1.2" fill="none"/><path d="M2267.5 287.5h16l-16 16z" fill="#6a6a6a"/><path d="M2278 299l6.5 6M2284.5 299l-6.5 6" stroke="#6e6e6e" stroke-width="1.2"/><path d="M2291.7 293.1L2295.5 296.9L2299.3 293.1" stroke="#6e6e6e" stroke-width="1.2" fill="none"/><rect x="2316" y="292" width="12" height="11.5" fill="#fff"/><rect x="2310" y="286.5" width="12.5" height="11.5" fill="#2f8af5" stroke="#4a4a4a" stroke-width="0.6"/><path d="M2336 293.25L2340.5 297.75L2345 293.25" stroke="#c6c6c6" stroke-width="1.3" fill="none"/><g fill="none" stroke="#c6c6c6" stroke-width="1.2"><rect x="2038.5" y="315.5" width="16.5" height="16" rx="1.5"/><path d="M2038.5 323.5h16.5M2040.5 319.5h2.5M2040.5 327.5h2.5"/></g><path d="M2155 329.5v-13.5q0-1 1-1h14q1 0 1 1v8M2163 331.5h-6l-2-2" fill="none" stroke="#c6c6c6" stroke-width="1.3"/><path d="M2155.5 327l4.5 4.5h-4.5z" fill="#c6c6c6"/><circle cx="2170.5" cy="330.5" r="4.3" fill="#c6c6c6"/><path d="M2170.5 327.8v5.4M2167.8 330.5h5.4" stroke="#505050" stroke-width="1.1"/><rect x="2180" y="315" width="16" height="16" rx="1.5" fill="none" stroke="#c6c6c6" stroke-width="1.3"/><path d="M2188 318l4.5 2.2v5l-4.5 2.3l-4.5-2.3v-5zM2183.5 320.2l4.5 2.3l4.5-2.3M2188 322.5v5" fill="none" stroke="#c6c6c6" stroke-width="1"/><circle cx="2195.5" cy="330.5" r="4.3" fill="#c6c6c6"/><path d="M2195.5 327.8v5.4M2192.8 330.5h5.4" stroke="#505050" stroke-width="1.1"/><path d="M2203.5 316.5q0-1.5 1.5-1.5h4.5l2 2.5h7.5q1.5 0 1.5 1.5v9.5q0 1.5-1.5 1.5h-14q-1.5 0-1.5-1.5z" fill="#c6c6c6"/><circle cx="2220.5" cy="330.5" r="4.3" fill="#c6c6c6"/><path d="M2220.5 327.8v5.4M2217.8 330.5h5.4" stroke="#505050" stroke-width="1.1"/><g fill="none" stroke="#6a6a6a" stroke-width="1.3"><rect x="2236.5" y="314" width="12" height="11" rx="2"/><rect x="2229" y="321.5" width="12" height="11" rx="2"/></g><rect x="2240.5" y="316.5" width="5" height="5" fill="#6a6a6a"/><g fill="none" stroke="#c6c6c6" stroke-width="1.3"><rect x="2261.5" y="314" width="12" height="11" rx="2" fill="#505050"/><rect x="2254" y="321.5" width="12" height="11" rx="2" fill="#505050"/><path d="M2265 321l-6 6.5M2258.5 323.5v4.5h4.5"/></g><rect x="2279.5" y="315" width="17" height="16.5" rx="2" fill="#c6c6c6"/><circle cx="2288" cy="323.2" r="4.6" fill="#505050"/><g fill="none" stroke="#6a6a6a" stroke-width="1.3"><rect x="2304" y="315" width="14" height="14" rx="1.5"/></g><rect x="2312" y="319.5" width="11" height="10.5" rx="2" fill="#6a6a6a"/><circle cx="2317.5" cy="325" r="2.3" fill="#505050"/><path d="M2306.5 322h5M2306.5 322l2-2M2306.5 322l2 2" stroke="#6a6a6a" stroke-width="1.2" fill="none"/><g transform="translate(2338,324)" stroke="#c6c6c6" fill="none" stroke-width="1.3"><path d="M-6.5-5.5h13M-2.5-5.5v-2.5h5v2.5M-5.5-5.5l0.7 13q0.1 1.5 1.6 1.5h6.4q1.5 0 1.6-1.5l0.7-13M-2.3-2.5v8M0-2.5v8M2.3-2.5v8"/></g><rect x="2083" y="340" width="252" height="35.5" fill="#606d8a"/><path d="M2034 375.5h301M2034 411.5h301M2059.5 340v71.5M2082.5 340v71.5" stroke="#2c2c2c" stroke-width="1"/><path d="M2038 357.5q8.5-9 17 0" fill="none" stroke="#c6c6c6" stroke-width="1.5"/><ellipse cx="2046.5" cy="357.5" rx="3.3" ry="3.6" fill="#c6c6c6"/><path d="M2038 392.5q8.5-9 17 0" fill="none" stroke="#c6c6c6" stroke-width="1.5"/><ellipse cx="2046.5" cy="392.5" rx="3.3" ry="3.6" fill="#c6c6c6"/><path d="M2065 364l10-11.5l2.2 2l-10 11.5l-3 1z" fill="#c6c6c6"/><path d="M2061.5 366.5h16.5" stroke="#c6c6c6" stroke-width="1.1"/><rect x="2065" y="386.5" width="13" height="12.5" rx="2.5" fill="#3a3a3a" stroke="#4c4c4c" stroke-width="1"/><defs><pattern id="ck7" x="2093" y="345" width="11" height="11" patternUnits="userSpaceOnUse"><rect width="11" height="11" fill="#fff"/><rect x="5.5" width="5.5" height="5.5" fill="#ccc"/><rect y="5.5" width="5.5" height="5.5" fill="#ccc"/></pattern></defs><rect x="2089.5" y="341.5" width="39" height="31" fill="none" stroke="#dfe6f5" stroke-width="1"/><rect x="2092.5" y="344.5" width="33" height="25" fill="url(#ck7)" stroke="#1c1c1c" stroke-width="1.2"/><rect x="2093" y="382" width="32.5" height="24" fill="#fff"/><rect x="2141.5" y="380.8" width="22" height="21.5" fill="#fff"/><path d="M2148 399h-0.5q-1.5 0-1.5-1.5v-12q0-1.5 1.5-1.5h10q1.5 0 1.5 1.5v12.5q0 1.5-1.5 1.5h-6.5" fill="none" stroke="#444" stroke-width="1.3"/><path d="M2146.5 396q3 0 3 3.5" fill="#444" stroke="#444" stroke-width="1"/></svg>
<div class="a t" style="top:235.75px;font-size:12.5px;line-height:18.5px;color:#e0e0e0;left:2093px;"><span class="c" style="width:25px">图层</span></div>
<div class="a t" style="top:259px;font-size:16px;line-height:22px;color:#e8e8e8;left:1832px;width:600px;text-align:center;"><span class="c" style="width:32px">正常</span></div>
<div class="a t se" style="top:259.5px;font-size:15px;line-height:21px;color:#e8e8e8;right:226.5px;text-align:right;"><span style="letter-spacing:0.6px">100</span></div>
<div class="a t se" style="top:343px;font-size:14px;line-height:15px;color:#e8ecf5;left:2136px;"><span style="letter-spacing:0.7px">100 %</span><span class="c" style="width:28px">正常</span></div>
<div class="a t se" style="top:357px;font-size:14px;line-height:15px;color:#e8ecf5;left:2136px;"><span class="c" style="width:28px">图层</span><span style="letter-spacing:0.7px"> 1</span></div>
<div class="a t se" style="top:392px;font-size:14px;line-height:15px;color:#e0e0e0;left:2168px;"><span class="c" style="width:28px">纸张</span></div>
<div class="a" style="left:2034px;top:936px;width:317px;height:138px;background:#505050;"></div>
<div class="a" style="left:2034px;top:936px;width:317px;height:19px;background:#3f3f3f;"></div>
<div class="a" style="left:2034px;top:936px;width:23px;height:19px;background:#383838;"></div>
<div class="a" style="left:2057px;top:936px;width:88px;height:24px;background:#505050;"></div>
<div class="a" style="left:2034px;top:1074px;width:317px;height:5px;background:#383838;"></div>
<svg class="a" style="left:2034px;top:936px;" width="317" height="140" viewBox="2034 936 317 140"><path d="M2040.5 940.5h9M2040.5 944.5h9M2040.5 948.5h9" stroke="#858585" stroke-width="1" fill="none"/><defs><linearGradient id="sbg" x1="0" y1="0" x2="0" y2="1"><stop offset="0" stop-color="#e6e6e6"/><stop offset="1" stop-color="#8e8e8e"/></linearGradient></defs><rect x="2066" y="940.3" width="18.5" height="3.8" rx="1.9" fill="url(#sbg)"/><path d="M2067.5 946.5999999999999l2.2-3l2.2 3z" fill="#c6c6c6" stroke="#505050" stroke-width="0.6"/><rect x="2066" y="946.4" width="18.5" height="3.8" rx="1.9" fill="url(#sbg)"/><path d="M2067.5 952.6999999999999l2.2-3l2.2 3z" fill="#c6c6c6" stroke="#505050" stroke-width="0.6"/><rect x="2066" y="952.8" width="18.5" height="3.8" rx="1.9" fill="url(#sbg)"/><path d="M2067.5 959.0999999999999l2.2-3l2.2 3z" fill="#c6c6c6" stroke="#505050" stroke-width="0.6"/><path d="M2056.5 966.5h-17q-2.5 0-2.5 2.5v90.5q0 2.5 2.5 2.5h17M2037 996.5h19.5M2037 1027h19.5" fill="none" stroke="#3c3c3c" stroke-width="1"/><rect x="2056.5" y="963.5" width="292.5" height="103.5" fill="none" stroke="#3c3c3c" stroke-width="1.2"/><rect x="2037.5" y="997" width="19" height="30" fill="#505050"/><defs><linearGradient id="hue" x1="0" x2="1"><stop offset="0" stop-color="#f00"/><stop offset="0.167" stop-color="#ff0"/><stop offset="0.333" stop-color="#0f0"/><stop offset="0.5" stop-color="#0ff"/><stop offset="0.667" stop-color="#00f"/><stop offset="0.833" stop-color="#f0f"/><stop offset="1" stop-color="#f00"/></linearGradient><linearGradient id="sat" x1="0" x2="1"><stop offset="0" stop-color="#3c4245"/><stop offset="1" stop-color="#003c4a"/></linearGradient><linearGradient id="val" x1="0" x2="1"><stop offset="0" stop-color="#000"/><stop offset="1" stop-color="#fff"/></linearGradient></defs><rect x="2075" y="977" width="209" height="10.7" fill="url(#hue)"/><rect x="2075.5" y="1008.5" width="208" height="9.5" fill="url(#sat)" stroke="#557781" stroke-width="1"/><rect x="2075" y="1039.5" width="209" height="10" fill="url(#val)"/><path d="M2179 995.75L2184.5 991.25L2190 995.75" stroke="#a8a8a8" stroke-width="1.3" fill="none"/><path d="M2070 1026.75L2075.5 1022.25L2081 1026.75" stroke="#a8a8a8" stroke-width="1.3" fill="none"/><path d="M2124 1057.75L2129.5 1053.25L2135 1057.75" stroke="#a8a8a8" stroke-width="1.3" fill="none"/><path d="M2334.5 981L2338.5 977L2342.5 981" stroke="#a0a0a0" stroke-width="1.1" fill="none"/><path d="M2334.5 986L2338.5 990L2342.5 986" stroke="#a0a0a0" stroke-width="1.1" fill="none"/><path d="M2334.5 1012L2338.5 1008L2342.5 1012" stroke="#a0a0a0" stroke-width="1.1" fill="none"/><path d="M2334.5 1017L2338.5 1021L2342.5 1017" stroke="#a0a0a0" stroke-width="1.1" fill="none"/><path d="M2334.5 1043L2338.5 1039L2342.5 1043" stroke="#a0a0a0" stroke-width="1.1" fill="none"/><path d="M2334.5 1048L2338.5 1052L2342.5 1048" stroke="#a0a0a0" stroke-width="1.1" fill="none"/><path d="M2034 1074.5v-1q0-3.5 4-3.5h94q4 0 4 3.5v1z" fill="#6f86c0"/><path d="M2140.5 1074.5v-1q0-3.5 4-3.5h96q4 0 4 3.5v1M2248.5 1074.5v-1q0-3.5 4-3.5h94q4 0 4 3.5v1" fill="none" stroke="#666" stroke-width="1"/></svg>
<div class="a t" style="top:939.25px;font-size:12.5px;line-height:18.5px;color:#e0e0e0;left:2093px;"><span class="c" style="width:50px">颜色滑块</span></div>
<div class="a t se" style="top:973.5px;font-size:14px;line-height:20px;color:#e8e8e8;left:2058px;">H</div>
<div class="a t se" style="top:1004.5px;font-size:14px;line-height:20px;color:#e8e8e8;left:2058px;">S</div>
<div class="a t se" style="top:1035.5px;font-size:14px;line-height:20px;color:#e8e8e8;left:2058px;">V</div>
<div class="a t se" style="top:973.5px;font-size:15px;line-height:21px;color:#e8e8e8;right:243.5px;text-align:right;"><span style="letter-spacing:0.6px">188</span></div>
<div class="a t se" style="top:1004.5px;font-size:15px;line-height:21px;color:#e8e8e8;right:236px;text-align:right;"><span style="letter-spacing:0.6px">0%</span></div>
<div class="a t se" style="top:1035.5px;font-size:15px;line-height:21px;color:#e8e8e8;right:236px;text-align:right;"><span style="letter-spacing:0.6px">26%</span></div>
<div class="a t se" style="left:2007px;top:972.5px;width:80px;height:18px;line-height:18px;text-align:center;font-size:11px;letter-spacing:0.2px;color:#9a9a9a;transform:rotate(-90deg);">RGB</div>
<div class="a t se" style="left:2007px;top:1003px;width:80px;height:18px;line-height:18px;text-align:center;font-size:11px;letter-spacing:0.2px;color:#ececec;transform:rotate(-90deg);">HSV</div>
<div class="a t se" style="left:2007px;top:1036px;width:80px;height:18px;line-height:18px;text-align:center;font-size:11px;letter-spacing:0.2px;color:#9a9a9a;transform:rotate(-90deg);">CMYK</div>
<div class="a" style="left:2034px;top:1079px;width:317px;height:309px;background:#505050;"></div>
<div class="a" style="left:2034px;top:1079px;width:317px;height:19px;background:#3f3f3f;"></div>
<div class="a" style="left:2034px;top:1079px;width:23px;height:19px;background:#383838;"></div>
<div class="a" style="left:2057px;top:1079px;width:64px;height:24px;background:#505050;"></div>
<div class="a" style="left:2122px;top:1079px;width:89px;height:19px;background:#494949;"></div>
<div class="a" style="left:2212px;top:1079px;width:89px;height:19px;background:#494949;"></div>
<div class="a" style="left:2034px;top:1388px;width:317px;height:2px;background:#383838;"></div>
<svg class="a" style="left:2034px;top:1079px;" width="317" height="22" viewBox="2034 1079 317 22"><path d="M2040.5 1083.5h9M2040.5 1087.5h9M2040.5 1091.5h9" stroke="#858585" stroke-width="1" fill="none"/><circle cx="2075" cy="1091" r="8.3" fill="none" stroke="#c6c6c6" stroke-width="1.3"/><rect x="2070.5" y="1086.5" width="9" height="9" rx="2" fill="#c6c6c6"/><path d="M2135 1087.5h11q4.5 0 4.5 4t-4.5 4h-9q-3.5 0-3.5 2.5" fill="none" stroke="#767676" stroke-width="1.3"/><path d="M2137.5 1084l-4 3.5l4 3.5" fill="none" stroke="#767676" stroke-width="1.3"/><path d="M2222.5 1098v-8.5h16v8.5M2222 1088.5l16-3.5" fill="none" stroke="#767676" stroke-width="1.4"/><path d="M2229 1093l4.5 2.5l-4.5 2.5z" fill="#767676"/></svg>
<div class="a t" style="top:1082.25px;font-size:12.5px;line-height:18.5px;color:#e0e0e0;left:2093px;"><span class="c" style="width:25px">色轮</span></div>
<div class="a t" style="top:1082.75px;font-size:11.5px;line-height:17.5px;color:#7c7c7c;left:2159.5px;"><span class="c" style="width:46px">历史记录</span></div>
<div class="a t" style="top:1082.75px;font-size:11.5px;line-height:17.5px;color:#7c7c7c;left:2249px;"><span class="c" style="width:46px">自动动作</span></div>
<div class="a" style="left:2060.9px;top:1105.5px;width:263px;height:263px;border-radius:50%;background:conic-gradient(from 0deg,#f0f018,#18e818 60deg,#18f0f0 120deg,#1818f0 180deg,#f018f0 240deg,#f01818 300deg,#f0f018 360deg);box-shadow:0 0 0 1px #3a3a3a;"></div>
<div class="a" style="left:2083.4px;top:1128px;width:218px;height:218px;background:#505050;border-radius:50%;box-shadow:0 0 0 1px #3f3f3f;"></div>
<div class="a" style="left:2121.7px;top:1165.2px;width:143px;height:143px;background:linear-gradient(to bottom,rgba(0,0,0,0),#000),linear-gradient(to right,#fff,#00ddff);box-shadow:0 0 2px 1px #3a3a3a;"></div>
<svg class="a" style="left:2034px;top:1100px;" width="317" height="290" viewBox="2034 1100 317 290"><circle cx="2120.6" cy="1271.6" r="5" fill="none" stroke="#1e1e1e" stroke-width="2.6"/><circle cx="2120.6" cy="1271.6" r="5" fill="none" stroke="#fff" stroke-width="1.3"/><g transform="translate(2192.4,1237) rotate(38)"><rect x="110" y="-6" width="21.5" height="12" fill="#1cb8e8" stroke="#1e1e1e" stroke-width="3.2"/><rect x="110.5" y="-6" width="21" height="12" fill="none" stroke="#fff" stroke-width="1.8"/></g><rect x="2054" y="1325.5" width="37" height="36.5" rx="4" fill="#4a4a4a" stroke="#6e6e6e" stroke-width="1"/><rect x="2057.5" y="1329" width="30" height="29.5" rx="1" fill="#fff"/><rect x="2035.6" y="1311" width="34.8" height="34.2" rx="4.5" fill="#424242" stroke="#7d91cf" stroke-width="3.2"/><rect x="2034.5" y="1364.5" width="56.5" height="20" rx="4" fill="none" stroke="#6e6e6e" stroke-width="1"/><defs><pattern id="ck8" x="2038" y="1368.5" width="12.4" height="12.4" patternUnits="userSpaceOnUse"><rect width="12.4" height="12.4" fill="#8a8a8a"/><rect x="6.2" width="6.2" height="6.2" fill="#fff"/><rect y="6.2" width="6.2" height="6.2" fill="#fff"/></pattern></defs><rect x="2038" y="1368.5" width="49.5" height="12.4" rx="3" fill="url(#ck8)"/><rect x="2198" y="1372" width="9.5" height="10" rx="1" fill="#bdbdbd"/><rect x="2238" y="1372" width="9.5" height="10" rx="1" fill="#bdbdbd"/><rect x="2278.5" y="1372" width="9.5" height="10" rx="1" fill="#bdbdbd"/><circle cx="2335" cy="1373" r="8.8" fill="none" stroke="#c6c6c6" stroke-width="1.3"/><path d="M2332 1367.5l7.5 5.5l-7.5 5.5z" fill="none" stroke="#c6c6c6" stroke-width="1.3" stroke-linejoin="round"/></svg>
<div class="a t" style="top:1372.3px;font-size:9.5px;line-height:10px;color:#505050;left:1902.8000000000002px;width:600px;text-align:center;font-weight:bold;">H</div>
<div class="a t" style="top:1372.3px;font-size:9.5px;line-height:10px;color:#505050;left:1942.8000000000002px;width:600px;text-align:center;font-weight:bold;">S</div>
<div class="a t" style="top:1372.3px;font-size:9.5px;line-height:10px;color:#505050;left:1983.3000000000002px;width:600px;text-align:center;font-weight:bold;">V</div>
<div class="a t se" style="top:1368px;font-size:14px;line-height:20px;color:#e8e8e8;left:2210px;"><span style="letter-spacing:1px">188</span></div>
<div class="a t se" style="top:1368px;font-size:14px;line-height:20px;color:#e8e8e8;right:284.5px;text-align:right;">0</div>
<div class="a t se" style="top:1368px;font-size:14px;line-height:20px;color:#e8e8e8;right:244.5px;text-align:right;"><span style="letter-spacing:1px">26</span></div>
<div class="a" style="left:2353px;top:89px;width:207px;height:612px;background:#505050;"></div>
<div class="a" style="left:2353px;top:89px;width:207px;height:19px;background:#3f3f3f;"></div>
<div class="a" style="left:2353px;top:89px;width:23px;height:19px;background:#383838;"></div>
<div class="a" style="left:2376px;top:89px;width:76px;height:25px;background:#505050;"></div>
<div class="a" style="left:2353px;top:86.5px;width:23px;height:2.5px;background:#383838;"></div>
<div class="a" style="left:2353px;top:182px;width:189px;height:495px;background:#404040;"></div>
<div class="a" style="left:2542px;top:182px;width:18px;height:495px;background:#484848;"></div>
<div class="a" style="left:2353px;top:677px;width:207px;height:24px;background:#4d4d4d;"></div>
<div class="a" style="left:2353px;top:701px;width:207px;height:7px;background:#383838;"></div>
<div class="a" style="left:2354.5px;top:115px;width:100px;height:32px;background:#69779a;border:1px solid #2f3340;border-radius:3px;box-sizing:border-box;"></div>
<div class="a" style="left:2456.5px;top:115px;width:100px;height:32px;background:#474747;border:1px solid #2e2e2e;border-radius:3px;box-sizing:border-box;"></div>
<div class="a" style="left:2354.5px;top:148px;width:100px;height:32px;background:#474747;border:1px solid #2e2e2e;border-radius:3px;box-sizing:border-box;"></div>
<svg class="a" style="left:2353px;top:89px;" width="207" height="612" viewBox="2353 89 207 612"><path d="M2359.5 93.5h9M2359.5 97.5h9M2359.5 101.5h9" stroke="#858585" stroke-width="1" fill="none"/><path d="M2401 94l-10 11.5" stroke="#c6c6c6" stroke-width="3.6" stroke-linecap="round"/><path d="M2385.5 110.5l1.5-4.5l3 3z" fill="#c6c6c6"/><path d="M2402.5 100.5h-5q-2 0-2 2v5.5q0 2 2 2h5M2395.5 105h7" fill="none" stroke="#c6c6c6" stroke-width="1.4"/><circle cx="2403" cy="100.5" r="1.5" fill="#c6c6c6"/><circle cx="2403" cy="105" r="1.5" fill="#c6c6c6"/><circle cx="2403" cy="110" r="1.5" fill="#c6c6c6"/><g transform="translate(2370.5,130.5)"><path d="M-11 11.5c-0.5-8 5-16 13-19l5.5 5.5c-1 8-8 14.5-18.5 13.5z" fill="none" stroke="#c6c6c6" stroke-width="1.3"/><path d="M-11 11.5c0.5-3 2-6 4-8l1.5 1.5l1.5-1l1 2l2-0.5l0.5 2l2.5 0c-3 3-8 4.5-13 4z" fill="#c6c6c6"/><path d="M3-8.5l4-4l6 5.5l-4 4.5z" fill="#c6c6c6"/></g><g transform="translate(2370.5,164)"><path d="M-10 10c-1-6 3-13 10-17l5.5 5.5c-3 7-8 11-12 11.5" fill="none" stroke="#c6c6c6" stroke-width="1.3"/><path d="M-11.5 11.5c3 0.5 6-0.5 8-3l-4-2c-1 2.5-2 4-4 5z" fill="#c6c6c6"/><path d="M1-8l4.5-4.5l6.5 5.5l-5 5z" fill="#c6c6c6"/></g><g transform="translate(2472.5,130.5) rotate(42)"><path d="M-3-13h6l1 4h-8zM-6.5-7.5q0-1.5 1.5-1.5h10q1.5 0 1.5 1.5v18q0 1.5-1.5 1.5h-10q-1.5 0-1.5-1.5z" fill="#c6c6c6"/><rect x="-6.5" y="3.5" width="13" height="4.5" fill="#474747"/></g><defs><filter id="bl1" x="-10%" y="-50%" width="120%" height="200%"><feGaussianBlur stdDeviation="1.2"/></filter><filter id="bl2" x="-10%" y="-50%" width="120%" height="200%"><feGaussianBlur stdDeviation="2"/></filter><filter id="bl05"><feGaussianBlur stdDeviation="0.5"/></filter></defs><rect x="2353" y="543" width="189" height="44" fill="#5e6b89"/><path d="M2354 181.5h188" stroke="#2c2c2c" stroke-width="1"/><path d="M2354 227.5h188" stroke="#2c2c2c" stroke-width="1"/><path d="M2354 272.5h188" stroke="#2c2c2c" stroke-width="1"/><path d="M2354 317.5h188" stroke="#2c2c2c" stroke-width="1"/><path d="M2354 362.5h188" stroke="#2c2c2c" stroke-width="1"/><path d="M2354 407.5h188" stroke="#2c2c2c" stroke-width="1"/><path d="M2354 452.5h188" stroke="#2c2c2c" stroke-width="1"/><path d="M2354 497.5h188" stroke="#2c2c2c" stroke-width="1"/><path d="M2354 542.5h188" stroke="#2c2c2c" stroke-width="1"/><path d="M2354 587.5h188" stroke="#2c2c2c" stroke-width="1"/><path d="M2542.5 182v405" stroke="#2c2c2c" stroke-width="1"/><path d="M2375 199.8L2377.4 198.2L2379.8 196.7L2382.2 195.3L2384.7 193.9L2387.1 192.6L2389.5 191.4L2391.9 190.2L2394.3 189.2L2396.8 188.2L2399.2 187.5L2401.6 186.8L2404 186.4L2406.4 186L2408.8 185.9L2411.2 185.9L2413.7 186.1L2416.1 186.4L2418.5 186.9L2420.9 187.5L2423.3 188.2L2425.8 189L2428.2 190L2430.6 190.9L2433 191.9L2435.4 193L2437.8 194L2440.2 195.1L2442.7 196L2445.1 197L2447.5 197.8L2449.9 198.6L2452.3 199.2L2454.8 199.7L2457.2 200.1L2459.6 200.4L2462 200.6L2464.4 200.6L2466.8 200.5L2469.2 200.2L2471.7 199.9L2474.1 199.4L2476.5 198.9L2478.9 198.3L2481.3 197.7L2483.8 197L2486.2 196.3L2488.6 195.7L2491 195.2L2491 195.2L2488.6 196.6L2486.2 197.9L2483.8 199.3L2481.3 200.5L2478.9 201.7L2476.5 202.9L2474.1 204L2471.7 204.9L2469.2 205.8L2466.8 206.5L2464.4 207.1L2462 207.5L2459.6 207.8L2457.2 207.9L2454.8 207.9L2452.3 207.7L2449.9 207.4L2447.5 206.9L2445.1 206.3L2442.7 205.6L2440.2 204.9L2437.8 204L2435.4 203.1L2433 202.2L2430.6 201.2L2428.2 200.3L2425.8 199.4L2423.3 198.5L2420.9 197.7L2418.5 197L2416.1 196.4L2413.7 195.8L2411.2 195.4L2408.8 195.1L2406.4 195L2404 194.9L2401.6 195L2399.2 195.2L2396.8 195.5L2394.3 195.9L2391.9 196.3L2389.5 196.9L2387.1 197.4L2384.7 198L2382.2 198.6L2379.8 199.1L2377.4 199.6L2375 199.8z" fill="#7e7e7e" opacity="0.9" filter="url(#bl05)"/><path d="M2370 243.8L2372.6 243L2375.3 242.1L2377.9 241.1L2380.6 240.1L2383.2 239L2385.9 238L2388.5 236.9L2391.2 235.9L2393.8 235.1L2396.5 234.3L2399.1 233.6L2401.8 233.1L2404.4 232.8L2407 232.6L2409.7 232.6L2412.3 232.8L2415 233.2L2417.6 233.7L2420.3 234.4L2422.9 235.2L2425.6 236.1L2428.2 237.1L2430.9 238.2L2433.5 239.3L2436.1 240.3L2438.8 241.3L2441.4 242.3L2444.1 243.2L2446.7 243.9L2449.4 244.5L2452 245L2454.7 245.3L2457.3 245.4L2460 245.3L2462.6 245.1L2465.2 244.7L2467.9 244.1L2470.5 243.4L2473.2 242.5L2475.8 241.6L2478.5 240.6L2481.1 239.5L2483.8 238.4L2486.4 237.4L2489.1 236.4L2491.7 235.4L2494.4 234.6L2497 233.9L2497 242.5L2494.4 243.2L2491.7 244L2489.1 245L2486.4 246L2483.8 247L2481.1 248.1L2478.5 249.2L2475.8 250.2L2473.2 251.1L2470.5 252L2467.9 252.7L2465.2 253.3L2462.6 253.7L2460 253.9L2457.3 254L2454.7 253.9L2452 253.6L2449.4 253.1L2446.7 252.5L2444.1 251.8L2441.4 250.9L2438.8 249.9L2436.1 248.9L2433.5 247.9L2430.9 246.8L2428.2 245.7L2425.6 244.7L2422.9 243.8L2420.3 243L2417.6 242.3L2415 241.8L2412.3 241.4L2409.7 241.2L2407 241.2L2404.4 241.4L2401.8 241.7L2399.1 242.2L2396.5 242.9L2393.8 243.7L2391.2 244.5L2388.5 245.5L2385.9 246.6L2383.2 247.6L2380.6 248.7L2377.9 249.7L2375.3 250.7L2372.6 251.6L2370 252.4z" fill="#787878" opacity="0.9" /><path d="M2366 291.8L2368.7 289.6L2371.5 288.4L2374.2 287.2L2376.9 286L2379.6 284.9L2382.4 283.8L2385.1 282.8L2387.8 281.8L2390.6 280.9L2393.3 280.1L2396 279.4L2398.8 278.9L2401.5 278.5L2404.2 278.3L2406.9 278.3L2409.7 278.3L2412.4 278.6L2415.1 279L2417.9 279.5L2420.6 280.1L2423.3 280.9L2426 281.7L2428.8 282.5L2431.5 283.4L2434.2 284.3L2437 285.2L2439.7 286L2442.4 286.7L2445.1 287.4L2447.9 287.9L2450.6 288.4L2453.3 288.7L2456.1 288.8L2458.8 288.8L2461.5 288.7L2464.2 288.5L2467 288.1L2469.7 287.6L2472.4 287.1L2475.2 286.5L2477.9 285.8L2480.6 285.1L2483.4 284.4L2486.1 283.8L2488.8 283.2L2491.5 282.8L2494.3 282.6L2497 283.6L2497 283.6L2494.3 285.7L2491.5 286.9L2488.8 288L2486.1 289.1L2483.4 290.3L2480.6 291.4L2477.9 292.4L2475.2 293.4L2472.4 294.4L2469.7 295.2L2467 295.9L2464.2 296.5L2461.5 296.9L2458.8 297.2L2456.1 297.4L2453.3 297.3L2450.6 297.2L2447.9 296.8L2445.1 296.4L2442.4 295.8L2439.7 295.1L2437 294.3L2434.2 293.5L2431.5 292.6L2428.8 291.7L2426 290.8L2423.3 290L2420.6 289.2L2417.9 288.5L2415.1 287.9L2412.4 287.4L2409.7 287L2406.9 286.8L2404.2 286.7L2401.5 286.7L2398.8 286.9L2396 287.2L2393.3 287.7L2390.6 288.2L2387.8 288.8L2385.1 289.4L2382.4 290.1L2379.6 290.8L2376.9 291.4L2374.2 292L2371.5 292.4L2368.7 292.7L2366 291.8z" fill="#808080" opacity="0.9" filter="url(#bl1)"/><defs><clipPath id="cws"><rect x="2354" y="318.5" width="160" height="28"/></clipPath></defs><g clip-path="url(#cws)"><path d="M2372 316H2497Q2518 332 2500 349H2366Q2354 336 2361 325Q2365 317 2372 316z" fill="#f8f8f8" filter="url(#bl1)"/></g><rect x="2476" y="343.5" width="34" height="4" fill="#808080"/><path d="M2388 376q14-6 26-4.5l30 10q16 3.5 32-1q-16 6-34 4l-28-9.5q-12-2-26 1z" fill="#8a8a8a" opacity="0.7" filter="url(#bl1)"/><path d="M2411 371.5l5-2l5 1l5-2l5 2.5l5 0l4 3.5l5 1l3 4l5 2l1 3.5l-5 1.5l-4-1.5l-5 1l-4-3.5l-5 0l-4-3.5l-5-0.5l-4-3.5l-5-0.5z" fill="#c4c4c4" filter="url(#bl05)"/><path d="M2424 372l8 1l8 5l6 5l-8 0l-8-4z" fill="#e4e4e4" filter="url(#bl1)"/><circle cx="2400.6" cy="418.9" r="0.5" fill="#9a9a9a" opacity="0.85"/><circle cx="2428.9" cy="423.8" r="1.5" fill="#9a9a9a" opacity="0.36"/><circle cx="2472.5" cy="425" r="0.4" fill="#9a9a9a" opacity="0.46"/><circle cx="2458.1" cy="430.5" r="1.5" fill="#9a9a9a" opacity="0.61"/><circle cx="2448.7" cy="423.9" r="0.6" fill="#9a9a9a" opacity="0.83"/><circle cx="2434.8" cy="428.1" r="0.5" fill="#9a9a9a" opacity="0.44"/><circle cx="2486.9" cy="417.5" r="0.4" fill="#9a9a9a" opacity="0.8"/><circle cx="2404.3" cy="419.3" r="1" fill="#9a9a9a" opacity="0.74"/><circle cx="2482.5" cy="423.9" r="0.7" fill="#9a9a9a" opacity="0.59"/><circle cx="2484.3" cy="430.1" r="0.4" fill="#9a9a9a" opacity="0.37"/><circle cx="2431.4" cy="420.2" r="1" fill="#9a9a9a" opacity="0.78"/><circle cx="2474.6" cy="426.7" r="0.5" fill="#9a9a9a" opacity="0.67"/><circle cx="2436.1" cy="423.9" r="0.6" fill="#9a9a9a" opacity="0.85"/><circle cx="2453.8" cy="435.7" r="0.8" fill="#9a9a9a" opacity="0.9"/><circle cx="2452.6" cy="424.8" r="0.8" fill="#9a9a9a" opacity="0.88"/><circle cx="2480.6" cy="427" r="0.7" fill="#9a9a9a" opacity="0.71"/><circle cx="2448" cy="435.5" r="0.8" fill="#9a9a9a" opacity="0.51"/><circle cx="2379.6" cy="428.6" r="0.5" fill="#9a9a9a" opacity="0.4"/><circle cx="2468.1" cy="428" r="0.4" fill="#9a9a9a" opacity="0.36"/><circle cx="2423.3" cy="419.7" r="0.5" fill="#9a9a9a" opacity="0.37"/><circle cx="2445.7" cy="421.8" r="1.5" fill="#9a9a9a" opacity="0.53"/><circle cx="2477.7" cy="433.7" r="0.7" fill="#9a9a9a" opacity="0.48"/><circle cx="2376.3" cy="417.9" r="0.4" fill="#9a9a9a" opacity="0.68"/><circle cx="2375.8" cy="420.7" r="0.5" fill="#9a9a9a" opacity="0.51"/><circle cx="2403.6" cy="420.7" r="0.8" fill="#9a9a9a" opacity="0.52"/><circle cx="2487" cy="429.4" r="0.5" fill="#9a9a9a" opacity="0.56"/><circle cx="2476.4" cy="425.8" r="0.7" fill="#9a9a9a" opacity="0.72"/><circle cx="2384.3" cy="428.7" r="0.7" fill="#9a9a9a" opacity="0.5"/><circle cx="2448.1" cy="431.7" r="0.8" fill="#9a9a9a" opacity="0.59"/><circle cx="2403" cy="415.3" r="0.8" fill="#9a9a9a" opacity="0.36"/><circle cx="2421.8" cy="421.6" r="0.5" fill="#9a9a9a" opacity="0.56"/><circle cx="2442.7" cy="422.2" r="0.8" fill="#9a9a9a" opacity="0.61"/><circle cx="2453.5" cy="427.6" r="0.8" fill="#9a9a9a" opacity="0.76"/><circle cx="2374.7" cy="419.2" r="0.7" fill="#9a9a9a" opacity="0.36"/><circle cx="2416.3" cy="420.9" r="0.8" fill="#9a9a9a" opacity="0.68"/><circle cx="2410.4" cy="416.3" r="0.8" fill="#9a9a9a" opacity="0.77"/><circle cx="2473.3" cy="424.9" r="0.5" fill="#9a9a9a" opacity="0.41"/><circle cx="2469.6" cy="435.6" r="0.7" fill="#9a9a9a" opacity="0.75"/><circle cx="2409.2" cy="414.2" r="0.8" fill="#9a9a9a" opacity="0.48"/><circle cx="2394.5" cy="418.3" r="0.7" fill="#9a9a9a" opacity="0.4"/><circle cx="2444.1" cy="434" r="0.6" fill="#9a9a9a" opacity="0.59"/><circle cx="2474.7" cy="423.2" r="0.5" fill="#9a9a9a" opacity="0.76"/><circle cx="2398.2" cy="419.5" r="0.5" fill="#9a9a9a" opacity="0.47"/><circle cx="2386.5" cy="421.8" r="0.4" fill="#9a9a9a" opacity="0.52"/><circle cx="2472.3" cy="429.5" r="0.5" fill="#9a9a9a" opacity="0.54"/><circle cx="2471.4" cy="422.8" r="0.7" fill="#9a9a9a" opacity="0.54"/><path d="M2366 471.8L2368.8 469.5L2371.5 468.3L2374.3 467L2377.1 465.9L2379.9 464.7L2382.6 463.5L2385.4 462.5L2388.2 461.4L2390.9 460.5L2393.7 459.7L2396.5 459L2399.2 458.5L2402 458.1L2404.8 457.8L2407.6 457.8L2410.3 457.9L2413.1 458.1L2415.9 458.5L2418.6 459.1L2421.4 459.7L2424.2 460.5L2427 461.3L2429.7 462.2L2432.5 463.1L2435.3 464L2438 464.9L2440.8 465.8L2443.6 466.6L2446.4 467.2L2449.1 467.8L2451.9 468.3L2454.7 468.6L2457.4 468.7L2460.2 468.8L2463 468.6L2465.8 468.4L2468.5 468L2471.3 467.5L2474.1 466.9L2476.8 466.3L2479.6 465.6L2482.4 464.9L2485.1 464.2L2487.9 463.5L2490.7 462.9L2493.5 462.5L2496.2 462.3L2499 463.3L2499 463.3L2496.2 465.5L2493.5 466.8L2490.7 467.9L2487.9 469.1L2485.1 470.3L2482.4 471.4L2479.6 472.5L2476.8 473.6L2474.1 474.5L2471.3 475.4L2468.5 476.1L2465.8 476.7L2463 477.2L2460.2 477.5L2457.4 477.7L2454.7 477.6L2451.9 477.5L2449.1 477.1L2446.4 476.6L2443.6 476L2440.8 475.3L2438 474.5L2435.3 473.6L2432.5 472.7L2429.7 471.8L2427 470.9L2424.2 470L2421.4 469.2L2418.6 468.5L2415.9 467.8L2413.1 467.3L2410.3 466.9L2407.6 466.7L2404.8 466.6L2402 466.6L2399.2 466.8L2396.5 467.1L2393.7 467.6L2390.9 468.1L2388.2 468.7L2385.4 469.4L2382.6 470.1L2379.9 470.8L2377.1 471.5L2374.3 472L2371.5 472.5L2368.8 472.8L2366 471.8z" fill="#a4a4a4" opacity="0.9" filter="url(#bl1)"/><path d="M2373 516.2L2375.5 515.1L2378 514L2380.6 512.9L2383.1 511.7L2385.6 510.6L2388.1 509.4L2390.6 508.3L2393.2 507.3L2395.7 506.3L2398.2 505.5L2400.7 504.7L2403.2 504.1L2405.8 503.7L2408.3 503.3L2410.8 503.2L2413.3 503.2L2415.9 503.4L2418.4 503.7L2420.9 504.2L2423.4 504.7L2425.9 505.4L2428.5 506.2L2431 507.1L2433.5 508L2436 509L2438.5 509.9L2441.1 510.8L2443.6 511.7L2446.1 512.5L2448.6 513.2L2451.1 513.8L2453.7 514.2L2456.2 514.6L2458.7 514.8L2461.2 514.9L2463.8 514.8L2466.3 514.6L2468.8 514.3L2471.3 513.9L2473.8 513.4L2476.4 512.8L2478.9 512.1L2481.4 511.4L2483.9 510.7L2486.4 510L2489 509.4L2491.5 508.8L2494 508.4L2494 508.4L2491.5 509.5L2489 510.5L2486.4 511.6L2483.9 512.7L2481.4 513.8L2478.9 514.9L2476.4 515.9L2473.8 516.9L2471.3 517.7L2468.8 518.5L2466.3 519.1L2463.8 519.6L2461.2 520L2458.7 520.2L2456.2 520.2L2453.7 520.1L2451.1 519.9L2448.6 519.5L2446.1 519L2443.6 518.3L2441.1 517.6L2438.5 516.8L2436 516L2433.5 515.1L2431 514.3L2428.5 513.4L2425.9 512.6L2423.4 511.9L2420.9 511.2L2418.4 510.7L2415.9 510.3L2413.3 510L2410.8 509.8L2408.3 509.8L2405.8 509.9L2403.2 510.1L2400.7 510.4L2398.2 510.8L2395.7 511.4L2393.2 512L2390.6 512.6L2388.1 513.3L2385.6 513.9L2383.1 514.6L2380.6 515.1L2378 515.6L2375.5 516L2373 516.2z" fill="#8e8e8e" opacity="0.9" filter="url(#bl05)"/><rect x="2392" y="568" width="148" height="17" fill="#525e7a"/><path d="M2373 561.2L2375.5 560.1L2378 559L2380.6 557.9L2383.1 556.8L2385.6 555.7L2388.1 554.6L2390.6 553.5L2393.2 552.5L2395.7 551.5L2398.2 550.7L2400.7 549.9L2403.2 549.3L2405.8 548.9L2408.3 548.6L2410.8 548.4L2413.3 548.4L2415.9 548.6L2418.4 548.9L2420.9 549.4L2423.4 550L2425.9 550.7L2428.5 551.5L2431 552.4L2433.5 553.3L2436 554.2L2438.5 555.1L2441.1 556L2443.6 556.9L2446.1 557.7L2448.6 558.4L2451.1 559L2453.7 559.5L2456.2 559.8L2458.7 560L2461.2 560.1L2463.8 560L2466.3 559.8L2468.8 559.5L2471.3 559L2473.8 558.5L2476.4 557.9L2478.9 557.2L2481.4 556.5L2483.9 555.8L2486.4 555.1L2489 554.4L2491.5 553.9L2494 553.4L2494 553.4L2491.5 554.5L2489 555.5L2486.4 556.5L2483.9 557.6L2481.4 558.7L2478.9 559.8L2476.4 560.8L2473.8 561.7L2471.3 562.6L2468.8 563.4L2466.3 564L2463.8 564.5L2461.2 564.8L2458.7 565L2456.2 565L2453.7 564.9L2451.1 564.7L2448.6 564.3L2446.1 563.7L2443.6 563.1L2441.1 562.4L2438.5 561.6L2436 560.7L2433.5 559.9L2431 559L2428.5 558.2L2425.9 557.4L2423.4 556.6L2420.9 556L2418.4 555.5L2415.9 555L2413.3 554.7L2410.8 554.6L2408.3 554.5L2405.8 554.6L2403.2 554.9L2400.7 555.2L2398.2 555.7L2395.7 556.2L2393.2 556.8L2390.6 557.4L2388.1 558.1L2385.6 558.8L2383.1 559.5L2380.6 560.1L2378 560.6L2375.5 561L2373 561.2z" fill="#ffffff" opacity="1" filter="url(#bl05)"/><circle cx="2395.5" cy="623.5" r="7.3" fill="#c6c6c6"/><path d="M2395.5 619v9M2391 623.5h9" stroke="#404040" stroke-width="2"/><g fill="none" stroke="#c6c6c6" stroke-width="1.3"><path d="M2360 693.5v2q0 1.5 1.5 1.5h11q1.5 0 1.5-1.5v-9.5"/><rect x="2357" y="681.5" width="14" height="12.5" rx="1.5" fill="#4d4d4d"/><path d="M2359.5 687.5l3.5 3.5l6-6.5"/></g><g transform="translate(2496.4,690)" fill="none" stroke="#c6c6c6" stroke-width="1.4"><path d="M-3-7.7h-3q-2.4 0-2.4 2.4v10.6q0 2.4 2.4 2.4h12q2.4 0 2.4-2.4v-10.6q0-2.4-2.4-2.4h-3"/><path d="M0-9v11.5M-3.5-1.2l3.5 3.7l3.5-3.7"/></g><g fill="none" stroke="#c6c6c6" stroke-width="1.3"><rect x="2513.5" y="681.5" width="12" height="12" rx="2"/><rect x="2517.5" y="685.5" width="12" height="12" rx="2" fill="#4d4d4d"/><path d="M2523.5 688v7M2520 691.5h7"/></g><g transform="translate(2546,690)" stroke="#c6c6c6" fill="none" stroke-width="1.3"><path d="M-6.5-5.5h13M-2.5-5.5v-2.5h5v2.5M-5.5-5.5l0.7 13q0.1 1.5 1.6 1.5h6.4q1.5 0 1.6-1.5l0.7-13M-2.3-2.5v8M0-2.5v8M2.3-2.5v8"/></g></svg>
<div class="a t" style="top:92.75px;font-size:12.5px;line-height:18.5px;color:#e0e0e0;left:2412px;"><span class="c" style="width:37.5px">子工具</span></div>
<div class="a t se" style="top:120px;font-size:16px;line-height:22px;color:#eef0f6;left:2388px;"><span class="c" style="width:32px">水彩</span></div>
<div class="a t se" style="top:120px;font-size:16px;line-height:22px;color:#e4e4e4;left:2490px;"><span class="c" style="width:32px">厚塗</span></div>
<div class="a t se" style="top:153px;font-size:16px;line-height:22px;color:#e4e4e4;left:2388px;"><span class="c" style="width:16px">墨</span></div>
<div class="a t se" style="top:209.5px;font-size:14.5px;line-height:16px;color:#e4e4e4;right:21.5px;text-align:right;"><span class="c" style="width:58px">水彩圓筆</span></div>
<div class="a t se" style="top:254.5px;font-size:14.5px;line-height:16px;color:#e4e4e4;right:21.5px;text-align:right;"><span class="c" style="width:58px">水彩平筆</span></div>
<div class="a t se" style="top:299.5px;font-size:14.5px;line-height:16px;color:#e4e4e4;right:21.5px;text-align:right;"><span class="c" style="width:58px">量染水彩</span></div>
<div class="a t se" style="top:344.5px;font-size:14.5px;line-height:16px;color:#e4e4e4;right:21.5px;text-align:right;"><span class="c" style="width:58px">濕潤水彩</span></div>
<div class="a t se" style="top:389.5px;font-size:14.5px;line-height:16px;color:#e4e4e4;right:21.5px;text-align:right;"><span class="c" style="width:58px">粗糙水彩</span></div>
<div class="a t se" style="top:434.5px;font-size:14.5px;line-height:16px;color:#e4e4e4;right:21.5px;text-align:right;"><span class="c" style="width:58px">潑墨水彩</span></div>
<div class="a t se" style="top:479.5px;font-size:14.5px;line-height:16px;color:#e4e4e4;right:21.5px;text-align:right;"><span class="c" style="width:29px">水筆</span></div>
<div class="a t mo" style="top:526px;font-size:13.33px;line-height:16px;color:#e4e4e4;right:21.5px;text-align:right;">Drifter Soft Color</div>
<div class="a t mo" style="top:571px;font-size:13.33px;line-height:16px;color:#eef0f6;right:21.5px;text-align:right;">Drifter Hard Color</div>
<div class="a t se" style="top:615.5px;font-size:14.8px;line-height:16px;color:#e4e4e4;left:2412px;"><span class="c" style="width:103.6px">添加下载的素材</span></div>
<div class="a" style="left:2353px;top:708px;width:207px;height:682px;background:#505050;"></div>
<div class="a" style="left:2353px;top:708px;width:207px;height:18px;background:#3f3f3f;"></div>
<div class="a" style="left:2353px;top:708px;width:23px;height:18px;background:#383838;"></div>
<div class="a" style="left:2376px;top:708px;width:88px;height:25px;background:#505050;"></div>
<div class="a" style="left:2353px;top:781px;width:207px;height:581px;background:#404040;"></div>
<div class="a" style="left:2353px;top:1362px;width:207px;height:26px;background:#515151;"></div>
<div class="a" style="left:2353px;top:1388px;width:207px;height:2px;background:#383838;"></div>
<div class="a" style="left:2354px;top:733px;width:204px;height:48px;background:#4f4f4f;box-shadow:0 0 0 1px #5a5a5a;"></div>
<div class="a" style="left:2354px;top:733px;width:102px;height:48px;background:#b6b6b6;"></div>
<div class="a" style="left:2354px;top:733px;width:102px;height:18px;background:#787878;border-bottom-left-radius:3px;"></div>
<svg class="a" style="left:2353px;top:708px;" width="207" height="682" viewBox="2353 708 207 682"><path d="M2359.5 712.5h9M2359.5 716.5h9M2359.5 720.5h9" stroke="#858585" stroke-width="1" fill="none"/><path d="M2384 716.5h18M2384 723h18" stroke="#c6c6c6" stroke-width="1.5"/><rect x="2388.5" y="714.3" width="2.5" height="4.5" fill="#505050"/><circle cx="2394.5" cy="716.5" r="2.3" fill="#c6c6c6"/><rect x="2395" y="720.5" width="2.5" height="4.5" fill="#505050"/><circle cx="2391.5" cy="723" r="2.3" fill="#c6c6c6"/><path d="M2380 762.2L2383.1 759.1L2386.2 756.3L2389.3 753.7L2392.4 751.3L2395.5 749.2L2398.6 747.2L2401.7 745.6L2404.8 744.6L2407.9 744.1L2411 743.7L2414.1 743.5L2417.2 743.5L2420.4 743.6L2423.5 743.9L2426.6 744.3L2429.7 744.9L2432.8 745.6L2435.9 746.4L2439 747.3L2442.1 748.3L2445.2 749.4L2448.3 750.5L2451.4 751.7L2454.5 752.8L2457.6 754L2460.7 755.1L2463.8 756.2L2466.9 757.3L2470 758.2L2473.1 759.1L2476.2 759.9L2479.3 760.6L2482.4 761.2L2485.5 761.6L2488.6 761.9L2491.8 762.1L2494.9 762.1L2498 762L2501.1 761.8L2504.2 761.5L2507.3 761.1L2510.4 760.6L2513.5 760L2516.6 759.3L2519.7 758.5L2522.8 757.8L2525.9 757L2529 756.4L2529 756.4L2525.9 758L2522.8 759.5L2519.7 760.9L2516.6 762.2L2513.5 763.5L2510.4 764.7L2507.3 765.8L2504.2 766.7L2501.1 767.6L2498 768.3L2494.9 768.8L2491.8 769.2L2488.6 769.5L2485.5 769.6L2482.4 769.5L2479.3 769.3L2476.2 769L2473.1 768.5L2470 767.9L2466.9 767.2L2463.8 766.3L2460.7 765.4L2457.6 764.4L2454.5 763.4L2451.4 762.3L2448.3 761.2L2445.2 760.1L2442.1 759L2439 757.9L2435.9 756.9L2432.8 755.9L2429.7 755L2426.6 754.2L2423.5 753.4L2420.4 752.8L2417.2 752.3L2414.1 752L2411 751.7L2407.9 751.6L2404.8 751.5L2401.7 752L2398.6 752.9L2395.5 754.1L2392.4 755.5L2389.3 757.1L2386.2 758.8L2383.1 760.6L2380 762.2z" fill="#585858" opacity="1" filter="url(#bl05)"/><rect x="2538.5" y="765.3" width="11.5" height="8.5" rx="1.5" fill="#c6c6c6"/><path d="M2536.5 765.3v-2.5a2.8 2.8 0 0 1 5.6 0v1" fill="none" stroke="#c6c6c6" stroke-width="1.3"/><path d="M2364 820.5h175.5" stroke="#5a5a5a" stroke-width="1"/><path d="M2364 862.5h175.5" stroke="#5a5a5a" stroke-width="1"/><path d="M2364 899.5h175.5" stroke="#5a5a5a" stroke-width="1"/><path d="M2364 941h175.5" stroke="#5a5a5a" stroke-width="1"/><path d="M2400.5 812.5h47v-2.5" fill="none" stroke="#626262" stroke-width="1"/><rect x="2400.5" y="803.5" width="31" height="9" fill="#5a5a5a" stroke="#6a6a6a" stroke-width="1"/><path d="M2400.5 854.5h47v-2.5" fill="none" stroke="#626262" stroke-width="1"/><rect x="2400.5" y="845.5" width="47" height="9" fill="#5a5a5a" stroke="#6a6a6a" stroke-width="1"/><path d="M2400.5 933.5h47v-2.5" fill="none" stroke="#626262" stroke-width="1"/><rect x="2400.5" y="924.5" width="47" height="9" fill="#5a5a5a" stroke="#6a6a6a" stroke-width="1"/><path d="M2400.5 975.5h47v-2.5" fill="none" stroke="#626262" stroke-width="1"/><rect x="2400.5" y="966.5" width="19.7" height="9" fill="#5a5a5a" stroke="#6a6a6a" stroke-width="1"/><path d="M2507.7 799.4L2511.5 795.6L2515.3 799.4" stroke="#b0b0b0" stroke-width="1.1" fill="none"/><path d="M2507.7 805.6L2511.5 809.4L2515.3 805.6" stroke="#b0b0b0" stroke-width="1.1" fill="none"/><path d="M2507.7 840.9L2511.5 837.1L2515.3 840.9" stroke="#b0b0b0" stroke-width="1.1" fill="none"/><path d="M2507.7 847.1L2511.5 850.9L2515.3 847.1" stroke="#b0b0b0" stroke-width="1.1" fill="none"/><path d="M2507.7 920.4L2511.5 916.6L2515.3 920.4" stroke="#b0b0b0" stroke-width="1.1" fill="none"/><path d="M2507.7 926.6L2511.5 930.4L2515.3 926.6" stroke="#b0b0b0" stroke-width="1.1" fill="none"/><path d="M2507.7 962.4L2511.5 958.6L2515.3 962.4" stroke="#b0b0b0" stroke-width="1.1" fill="none"/><path d="M2507.7 968.6L2511.5 972.4L2515.3 968.6" stroke="#b0b0b0" stroke-width="1.1" fill="none"/><rect x="2521.5" y="785.5" width="18" height="29" rx="1.5" fill="#5c5c5c" stroke="#707070" stroke-width="1"/><rect x="2521.5" y="827.5" width="18" height="29" rx="1.5" fill="#5c5c5c" stroke="#707070" stroke-width="1"/><rect x="2521.5" y="869.5" width="18" height="24" rx="1.5" fill="#5c5c5c" stroke="#707070" stroke-width="1"/><rect x="2521.5" y="906.5" width="18" height="29" rx="1.5" fill="#5c5c5c" stroke="#707070" stroke-width="1"/><path d="M2526.5 795L2530.5 799L2534.5 795" stroke="#c6c6c6" stroke-width="1.3" fill="none"/><path d="M2526.5 800.5L2530.5 804.5L2534.5 800.5" stroke="#c6c6c6" stroke-width="1.3" fill="none"/><rect x="2526" y="837.5" width="9" height="8.5" rx="1.5" fill="none" stroke="#c6c6c6" stroke-width="1.3"/><path d="M2527.5 845l6-6.5" stroke="#c6c6c6" stroke-width="1.2"/><path d="M2528.25 877L2532.75 881.5L2528.25 886" stroke="#c6c6c6" stroke-width="1.4" fill="none"/><path d="M2530.5 913v9M2526.5 918.5l4 4l4-4" fill="none" stroke="#c6c6c6" stroke-width="1.7"/><path d="M2524.5 923q6 5.5 12 0" fill="none" stroke="#c6c6c6" stroke-width="1.3"/><rect x="2406" y="871" width="21" height="21.5" fill="#62708f"/><rect x="2429" y="871" width="21" height="21.5" fill="#62708f"/><rect x="2452" y="871" width="21" height="21.5" fill="#62708f"/><rect x="2475" y="871" width="21" height="21.5" fill="#3a3a3a"/><rect x="2498" y="871" width="21" height="21.5" fill="#3a3a3a"/><path d="M2541.5 781v581" stroke="#3d3d3d" stroke-width="1"/><path d="M2519 1368a7.5 7.5 0 1 0 4.5 0" fill="none" stroke="#c6c6c6" stroke-width="1.2"/><circle cx="2521.3" cy="1375.5" r="1.8" fill="#c6c6c6"/><path d="M2521.3 1367v8" stroke="#c6c6c6" stroke-width="1.2"/><path d="M2514 1371.5l1-1.5M2516 1369l1.5-1" stroke="#c6c6c6" stroke-width="1"/><g transform="translate(2546.5,1375.5)"><path d="M-6.4-7C-4-9.3 0.5-8.9 2.3-5.7C3.5-3.5 3-2 3.3-1L8.5 4.7C10 6.5 7.5 9.5 5.5 8.3L-0.2 3.4C-2 2.1-4 2.9-5.9 1.7C-8.3 0.1-9-2.5-8.2-4.2L-3.3-0.9C-1.9-0.1-0.3-1.5-1.1-3.1Z" fill="none" stroke="#c6c6c6" stroke-width="1.4" stroke-linejoin="round"/></g></svg>
<div class="a t" style="top:711.25px;font-size:12.5px;line-height:18.5px;color:#e0e0e0;left:2412px;"><span class="c" style="width:50px">工具属性</span></div>
<div class="a t mo" style="top:734.5px;font-size:13.33px;line-height:16px;color:#e8e8e8;left:2354.5px;">Drifter Hard Color</div>
<div class="a t se" style="top:785.5px;font-size:14.5px;line-height:16px;color:#e4e4e4;left:2374px;"><span class="c" style="width:58px">笔刷尺寸</span></div>
<div class="a t se" style="top:827.5px;font-size:14.5px;line-height:16px;color:#e4e4e4;left:2374px;"><span class="c" style="width:58px">不透明度</span></div>
<div class="a t se" style="top:873.5px;font-size:14.5px;line-height:16px;color:#e4e4e4;left:2374px;"><span class="c" style="width:29px">硬度</span></div>
<div class="a t se" style="top:906.5px;font-size:14.5px;line-height:16px;color:#e4e4e4;left:2374px;"><span class="c" style="width:58px">笔刷浓度</span></div>
<div class="a t se" style="top:948.5px;font-size:14.5px;line-height:16px;color:#e4e4e4;left:2374px;"><span class="c" style="width:58px">手颤修正</span></div>
<div class="a t se" style="top:792px;font-size:15px;line-height:21px;color:#e8e8e8;right:56px;text-align:right;"><span style="letter-spacing:0.6px">71.0</span></div>
<div class="a t se" style="top:834px;font-size:15px;line-height:21px;color:#e8e8e8;right:56px;text-align:right;"><span style="letter-spacing:0.6px">100</span></div>
<div class="a t se" style="top:913px;font-size:15px;line-height:21px;color:#e8e8e8;right:56px;text-align:right;"><span style="letter-spacing:0.6px">100</span></div>
<div class="a t se" style="top:955px;font-size:15px;line-height:21px;color:#e8e8e8;right:56px;text-align:right;"><span style="letter-spacing:0.6px">4</span></div>
<div class="a" style="left:1638px;top:1109px;width:272px;height:262px;background:#383838;box-shadow:2px 3px 6px rgba(0,0,0,0.55);"></div>
<div class="a" style="left:1645px;top:1133px;width:258px;height:161px;background-color:#fff;background-image:conic-gradient(#cecece 25%,#fff 0 50%,#cecece 0 75%,#fff 0);background-size:16px 16px;background-position:-1px -2px;box-shadow:-1px -1px 0 #1a1a1a;"></div>
<div class="a" style="left:1644.5px;top:1294px;width:259px;height:71px;background:#4a4a4a;"></div>
<div class="a" style="left:1661px;top:1324.5px;width:226px;height:14px;background:#3c3c3c;"></div>
<svg class="a" style="left:1638px;top:1109px;" width="272" height="262" viewBox="1638 1109 272 262"><path d="M1649 1117.5h9M1649 1121.5h9M1649 1125.5h9" stroke="#5a5a5a" stroke-width="1" fill="none"/><path d="M1870.5 1126.5h11" stroke="#c6c6c6" stroke-width="1.4"/><path d="M1889.5 1116.5l9.5 9.5M1899 1116.5l-9.5 9.5" stroke="#c6c6c6" stroke-width="1.4"/><circle cx="1798.7" cy="1162.8" r="28" fill="#606466" filter="url(#blm)"/><defs><filter id="blm"><feGaussianBlur stdDeviation="0.6"/></filter></defs><defs><clipPath id="cmp"><rect x="1645" y="1295" width="258" height="30"/></clipPath></defs><g clip-path="url(#cmp)"><rect x="1649.5" y="1301.5" width="30.5" height="17.5" rx="4" fill="#ff2a3c" stroke="#000" stroke-opacity="0.5" stroke-width="1"/><rect x="1689.5" y="1301.5" width="30.5" height="17.5" rx="4" fill="#ff9a3c" stroke="#000" stroke-opacity="0.5" stroke-width="1"/><rect x="1729.5" y="1301.5" width="30.5" height="17.5" rx="4" fill="#fff450" stroke="#000" stroke-opacity="0.5" stroke-width="1"/><rect x="1769.5" y="1301.5" width="30.5" height="17.5" rx="4" fill="#4ade50" stroke="#000" stroke-opacity="0.5" stroke-width="1"/><rect x="1809.5" y="1301.5" width="30.5" height="17.5" rx="4" fill="#006478" stroke="#000" stroke-opacity="0.5" stroke-width="1"/><rect x="1849.5" y="1301.5" width="30.5" height="17.5" rx="4" fill="#2a6cf0" stroke="#000" stroke-opacity="0.5" stroke-width="1"/><rect x="1889.5" y="1301.5" width="30.5" height="17.5" rx="4" fill="#22ccff" stroke="#000" stroke-opacity="0.5" stroke-width="1"/></g><rect x="1645" y="1324.3" width="15.5" height="14.5" rx="2" fill="#5a5a5a"/><rect x="1887.5" y="1324.3" width="15.5" height="14.5" rx="2" fill="#5a5a5a"/><path d="M1654.25 1328L1650.75 1331.5L1654.25 1335" stroke="#c0c0c0" stroke-width="1.2" fill="none"/><path d="M1893.75 1328L1897.25 1331.5L1893.75 1335" stroke="#c0c0c0" stroke-width="1.2" fill="none"/><rect x="1661" y="1324.8" width="103" height="13.4" rx="6.7" fill="#5b5b5b"/><rect x="1648" y="1344" width="17.5" height="17.5" rx="3" fill="#3a3a3a" stroke="#454545" stroke-width="1"/><path d="M1705.5 1352.5L1708.8 1352.5M1705.04 1354.8L1708.09 1356.06M1703.74 1356.74L1706.08 1359.08M1701.8 1358.04L1703.06 1361.09M1699.5 1358.5L1699.5 1361.8M1697.2 1358.04L1695.94 1361.09M1695.26 1356.74L1692.92 1359.08M1693.96 1354.8L1690.91 1356.06M1693.5 1352.5L1690.2 1352.5M1693.96 1350.2L1690.91 1348.94M1695.26 1348.26L1692.92 1345.92M1697.2 1346.96L1695.94 1343.91M1699.5 1346.5L1699.5 1343.2M1701.8 1346.96L1703.06 1343.91M1703.74 1348.26L1706.08 1345.92M1705.04 1350.2L1708.09 1348.94" stroke="#c6c6c6" stroke-width="1.4" fill="none"/><path d="M1718.5 1360h7.5q5 0 5-5q0-5-5-5h-5" fill="none" stroke="#c6c6c6" stroke-width="1.5"/><path d="M1716.5 1350l6-4.5v9z" fill="#c6c6c6"/><g transform="translate(3498,0) scale(-1,1)"><path d="M1743 1360h7.5q5 0 5-5q0-5-5-5h-5" fill="none" stroke="#686868" stroke-width="1.5"/><path d="M1741 1350l6-4.5v9z" fill="#686868"/></g><path d="M1767.5 1341v23" stroke="#6a6a6a" stroke-width="1"/><rect x="1772.5" y="1340.5" width="31" height="24" rx="1.5" fill="#5a5a5a" stroke="#7a7a7a" stroke-width="1"/><circle cx="1786.5" cy="1352.5" r="5.3" fill="#c6c6c6"/><path d="M1791 1353.5l2.5 2.5l5.5-5.5" fill="none" stroke="#c6c6c6" stroke-width="1.3"/><path d="M1810.5 1361.5l11-13.5" stroke="#c6c6c6" stroke-width="3.3" stroke-linecap="round"/><path d="M1807 1365l1.5-4.5l3 2.5z" fill="#c6c6c6"/><path d="M1821 1353.5c1.5 2 3 3.5 3 5.5a3 3 0 0 1-6 0c0-2 1.5-3.5 3-5.5zM1826 1353.5c1.5 2 3 3.5 3 5.5a3 3 0 0 1-6 0" fill="#8a8a8a" stroke="#c6c6c6" stroke-width="0.9"/><rect x="1829" y="1340" width="24.5" height="25" fill="#62708f"/><g transform="translate(1841.5,1352.5) rotate(40)"><path d="M-2.5-11.5h5l1 3.5h-7zM-6-6.5q0-1.5 1.5-1.5h9q1.5 0 1.5 1.5v16q0 1.5-1.5 1.5h-9q-1.5 0-1.5-1.5z" fill="#c6c6c6"/><rect x="-6" y="3" width="12" height="4" fill="#62708f"/></g><defs><linearGradient id="gb2" x1="0" y1="0" x2="1" y2="1"><stop offset="0" stop-color="#d0d0d0"/><stop offset="0.55" stop-color="#6a6a6a"/><stop offset="1" stop-color="#c0c0c0"/></linearGradient></defs><g transform="translate(1867.5,1353)"><path d="M-4.8-10.5c3.3 4.8 6.7 8 6.7 13a6.7 6.7 0 0 1-13.4 0c0-5 3.4-8.2 6.7-13zM4.8-10.5c3.3 4.8 6.7 8 6.7 13a6.7 6.7 0 0 1-13.4 0c0-5 3.4-8.2 6.7-13z" fill="url(#gb2)" stroke="#c6c6c6" stroke-width="1"/><path d="M0-3.5c1.5 2 2 3.8 2 6a6.7 6.7 0 0 1-2 4.7a6.7 6.7 0 0 1-2-4.7c0-2.2 0.5-4 2-6z" fill="#8a8a8a"/></g><g transform="translate(1892,1353)"><path d="M-11 11l2.5-6l9-9l3.5 3.5l-9 9z" fill="none" stroke="#c6c6c6" stroke-width="1.3" stroke-linejoin="round"/><path d="M-11 11l2-5l3 3z" fill="#c6c6c6"/><path d="M0-6.5l6.5 6.5" stroke="#c6c6c6" stroke-width="2.5" stroke-linecap="round"/><path d="M4-3.5l4.5-4.5" stroke="#c6c6c6" stroke-width="4.5" stroke-linecap="round"/></g></svg>
<div class="a t" style="top:1113.25px;font-size:11.5px;line-height:17.5px;color:#8e8e8e;left:1473.5px;width:600px;text-align:center;"><span class="c" style="width:23px">混色</span></div>
</body></html>
